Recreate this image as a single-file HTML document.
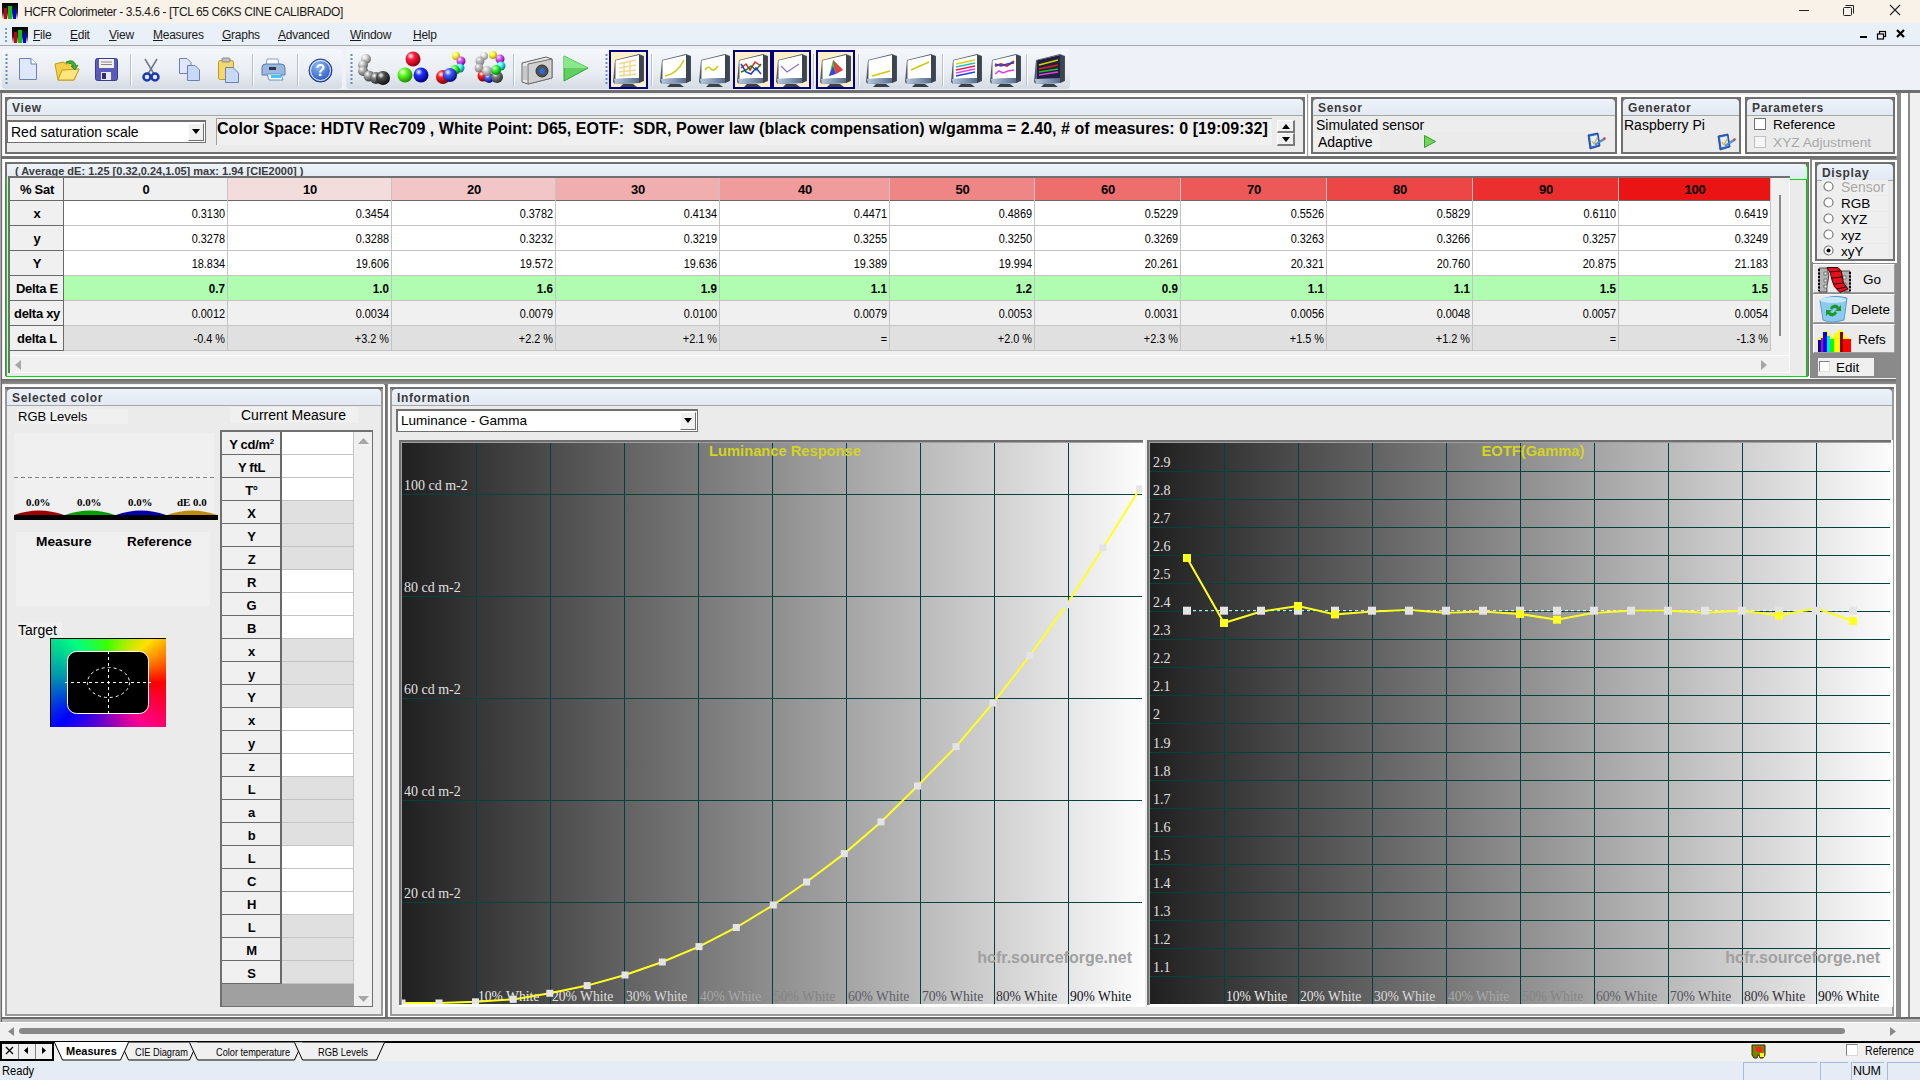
<!DOCTYPE html><html><head><meta charset="utf-8"><title>HCFR</title><style>
*{margin:0;padding:0;box-sizing:border-box}
html,body{width:1920px;height:1080px;overflow:hidden;background:#f0f0f0;font-family:"Liberation Sans",sans-serif;font-size:12px;color:#000}
.a{position:absolute}
.t{position:absolute;white-space:nowrap;line-height:1}
.ser{font-family:"Liberation Serif",serif}
.hdrt{position:absolute;font-weight:bold;font-size:12px;letter-spacing:0.65px;color:#3a3a3a;white-space:nowrap;line-height:1}
</style></head><body>
<div class="a" style="left:0px;top:0px;width:1920px;height:23px;background:#f9f2e8;"></div>
<div class="t" style="left:24px;top:6px;font-size:12px;color:#1a1a1a;letter-spacing:-0.4px">HCFR Colorimeter - 3.5.4.6 - [TCL 65 C6KS CINE CALIBRADO]</div>
<svg class="a" style="left:2px;top:3px" width="16" height="16" viewBox="0 0 16 16"><defs><linearGradient id="ai2" x1="0" x2="0" y1="0" y2="1"><stop offset="0" stop-color="#000"/><stop offset="0.6" stop-color="#202830"/><stop offset="1" stop-color="#f0f0f0"/></linearGradient></defs><rect x="0" y="0" width="16" height="16" fill="url(#ai2)"/><rect x="2" y="5" width="3" height="11" fill="#d00000"/><rect x="6" y="3" width="4" height="13" fill="#10c010"/><rect x="11" y="6" width="3" height="10" fill="#0000e0"/></svg>
<svg class="a" style="left:1790px;top:0" width="130" height="23"><line x1="9" y1="10.5" x2="19" y2="10.5" stroke="#222" stroke-width="1"/><rect x="53.5" y="7.5" width="8" height="8" fill="none" stroke="#222" rx="1"/><path d="M55.5 5.5 H63.5 V13.5" fill="none" stroke="#222"/><line x1="100" y1="5" x2="110" y2="15" stroke="#222" stroke-width="1.1"/><line x1="110" y1="5" x2="100" y2="15" stroke="#222" stroke-width="1.1"/></svg>
<div class="a" style="left:0px;top:23px;width:1920px;height:22px;background:#eaf0f8;"></div>
<div class="a" style="left:0px;top:45px;width:1920px;height:1px;background:#a8a8a8;"></div>
<div class="t" style="left:33px;top:29px;font-size:12px;color:#1a1a1a;letter-spacing:-0.25px"><u>F</u>ile</div>
<div class="t" style="left:70px;top:29px;font-size:12px;color:#1a1a1a;letter-spacing:-0.25px"><u>E</u>dit</div>
<div class="t" style="left:109px;top:29px;font-size:12px;color:#1a1a1a;letter-spacing:-0.25px"><u>V</u>iew</div>
<div class="t" style="left:153px;top:29px;font-size:12px;color:#1a1a1a;letter-spacing:-0.25px"><u>M</u>easures</div>
<div class="t" style="left:222px;top:29px;font-size:12px;color:#1a1a1a;letter-spacing:-0.25px"><u>G</u>raphs</div>
<div class="t" style="left:278px;top:29px;font-size:12px;color:#1a1a1a;letter-spacing:-0.25px"><u>A</u>dvanced</div>
<div class="t" style="left:350px;top:29px;font-size:12px;color:#1a1a1a;letter-spacing:-0.25px"><u>W</u>indow</div>
<div class="t" style="left:413px;top:29px;font-size:12px;color:#1a1a1a;letter-spacing:-0.25px"><u>H</u>elp</div>
<svg class="a" style="left:12px;top:27px" width="16" height="16" viewBox="0 0 16 16"><defs><linearGradient id="ai12" x1="0" x2="0" y1="0" y2="1"><stop offset="0" stop-color="#000"/><stop offset="0.6" stop-color="#202830"/><stop offset="1" stop-color="#f0f0f0"/></linearGradient></defs><rect x="0" y="0" width="16" height="16" fill="url(#ai12)"/><rect x="2" y="5" width="3" height="11" fill="#d00000"/><rect x="6" y="3" width="4" height="13" fill="#10c010"/><rect x="11" y="6" width="3" height="10" fill="#0000e0"/></svg>
<svg class="a" style="left:1855px;top:27px" width="65" height="16"><rect x="5" y="9" width="7" height="2" fill="#000"/><rect x="24.5" y="4.5" width="6" height="5" fill="none" stroke="#000" stroke-width="1.2"/><rect x="22.5" y="7" width="6" height="5" fill="#eaf0f8" stroke="#000" stroke-width="1.2"/><path d="M42 3 L49 10 M49 3 L42 10" stroke="#000" stroke-width="2.2"/></svg>
<svg class="a" style="left:4px;top:28px" width="4" height="14"><line x1="2" y1="0" x2="2" y2="14" stroke="#7a9ac0" stroke-width="2" stroke-dasharray="2,2"/></svg>
<div class="a" style="left:0px;top:46px;width:1920px;height:44px;background:#eef2f8;"></div>
<div class="a" style="left:2px;top:49px;width:340px;height:40px;background:linear-gradient(#f4f7fb,#e9edf3 60%,#d5dbe3);border-radius:4px"></div>
<div class="a" style="left:346px;top:49px;width:724px;height:40px;background:linear-gradient(#f4f7fb,#e9edf3 60%,#d5dbe3);border-radius:4px"></div>
<svg class="a" style="left:5px;top:54px" width="3" height="31"><line x1="1.5" y1="0" x2="1.5" y2="31" stroke="#6a8ab8" stroke-width="2" stroke-dasharray="2,2"/></svg>
<svg class="a" style="left:350px;top:54px" width="3" height="31"><line x1="1.5" y1="0" x2="1.5" y2="31" stroke="#6a8ab8" stroke-width="2" stroke-dasharray="2,2"/></svg>
<svg class="a" style="left:605px;top:54px" width="3" height="31"><line x1="1.5" y1="0" x2="1.5" y2="31" stroke="#6a8ab8" stroke-width="2" stroke-dasharray="2,2"/></svg>
<div class="a" style="left:130px;top:54px;width:1px;height:32px;background:#b8c0cc;"></div>
<div class="a" style="left:131px;top:54px;width:1px;height:32px;background:#ffffff;"></div>
<div class="a" style="left:252px;top:54px;width:1px;height:32px;background:#b8c0cc;"></div>
<div class="a" style="left:253px;top:54px;width:1px;height:32px;background:#ffffff;"></div>
<div class="a" style="left:297px;top:54px;width:1px;height:32px;background:#b8c0cc;"></div>
<div class="a" style="left:298px;top:54px;width:1px;height:32px;background:#ffffff;"></div>
<div class="a" style="left:513px;top:54px;width:1px;height:32px;background:#b8c0cc;"></div>
<div class="a" style="left:514px;top:54px;width:1px;height:32px;background:#ffffff;"></div>
<div class="a" style="left:651px;top:54px;width:1px;height:32px;background:#b8c0cc;"></div>
<div class="a" style="left:652px;top:54px;width:1px;height:32px;background:#ffffff;"></div>
<div class="a" style="left:813px;top:54px;width:1px;height:32px;background:#b8c0cc;"></div>
<div class="a" style="left:814px;top:54px;width:1px;height:32px;background:#ffffff;"></div>
<div class="a" style="left:858px;top:54px;width:1px;height:32px;background:#b8c0cc;"></div>
<div class="a" style="left:859px;top:54px;width:1px;height:32px;background:#ffffff;"></div>
<div class="a" style="left:942px;top:54px;width:1px;height:32px;background:#b8c0cc;"></div>
<div class="a" style="left:943px;top:54px;width:1px;height:32px;background:#ffffff;"></div>
<div class="a" style="left:1026px;top:54px;width:1px;height:32px;background:#b8c0cc;"></div>
<div class="a" style="left:1027px;top:54px;width:1px;height:32px;background:#ffffff;"></div>
<svg class="a" style="left:18px;top:57px" width="20" height="24" viewBox="0 0 20 24"><path d="M1.5 1.5 H13 L18.5 7 V22.5 H1.5 Z" fill="#dfe8fa" stroke="#6a82b8" stroke-width="1"/><path d="M13 1.5 V7 H18.5" fill="#fff" stroke="#6a82b8" stroke-width="1"/></svg>
<svg class="a" style="left:54px;top:58px" width="26" height="24" viewBox="0 0 26 24"><path d="M1 6 L9 4 L12 6 L20 5 L21 12 L25 11 L20 22 L4 22 Z" fill="#f4d04a" stroke="#c89a10" stroke-width="1"/><path d="M4 22 L8 12 L25 11 L20 22 Z" fill="#ffe680" stroke="#c89a10" stroke-width="1"/><path d="M12 4 Q20 0 22 8 L24 7 L21 12 L17 8 L19 8 Q17 4 12 5 Z" fill="#3cb43c" stroke="#1a7a1a" stroke-width="0.8"/></svg>
<svg class="a" style="left:95px;top:58px" width="23" height="23" viewBox="0 0 23 23"><rect x="0.5" y="0.5" width="22" height="22" rx="2" fill="#5a5ab8" stroke="#3a3a90"/><rect x="4" y="1" width="15" height="9" fill="#f0f0f0"/><line x1="6" y1="4" x2="17" y2="4" stroke="#888"/><line x1="6" y1="6.5" x2="17" y2="6.5" stroke="#888"/><rect x="6" y="14" width="10" height="8" fill="#e8e8f0"/><rect x="7" y="15" width="4" height="6" fill="#303070"/></svg>
<svg class="a" style="left:142px;top:58px" width="18" height="24" viewBox="0 0 18 24"><line x1="3" y1="1" x2="12" y2="16" stroke="#707888" stroke-width="1.5"/><line x1="15" y1="1" x2="6" y2="16" stroke="#707888" stroke-width="1.5"/><circle cx="5" cy="19" r="3.5" fill="none" stroke="#1a3ab0" stroke-width="2.5"/><circle cx="13" cy="19" r="3.5" fill="none" stroke="#1a3ab0" stroke-width="2.5"/></svg>
<svg class="a" style="left:178px;top:57px" width="23" height="25" viewBox="0 0 23 25"><path d="M1.5 1.5 H9 L13 5.5 V16.5 H1.5 Z" fill="#dfe8fa" stroke="#6a82b8"/><path d="M9.5 8.5 H17 L21.5 13 V23.5 H9.5 Z" fill="#c8d8f8" stroke="#6a82b8"/></svg>
<svg class="a" style="left:217px;top:57px" width="23" height="26" viewBox="0 0 23 26"><rect x="1.5" y="3.5" width="15" height="19" rx="2" fill="#f4d86a" stroke="#b8962a"/><rect x="5" y="1" width="8" height="4" rx="1" fill="#c0c0c0" stroke="#888"/><path d="M8.5 10.5 H16 L21.5 16 V25.5 H8.5 Z" fill="#c8d8f8" stroke="#6a82b8"/></svg>
<svg class="a" style="left:261px;top:58px" width="25" height="24" viewBox="0 0 25 24"><path d="M6 1 H17 L18 9 H5 Z" fill="#fff" stroke="#8aa0c0"/><path d="M1 9 Q1 6 5 6 H20 Q24 6 24 10 V17 H1 Z" fill="#9ab8e0" stroke="#5a7ab0"/><rect x="8" y="9" width="7" height="3" fill="#303848"/><path d="M6 16 H20 L22 22 H8 Z" fill="#fff" stroke="#6a90c8"/><rect x="10" y="17" width="10" height="3" fill="#40c8f0"/></svg>
<svg class="a" style="left:308px;top:58px" width="25" height="25" viewBox="0 0 25 25"><defs><radialGradient id="hg" cx="0.4" cy="0.3" r="0.8"><stop offset="0" stop-color="#8ab8f8"/><stop offset="1" stop-color="#1a4ab8"/></radialGradient></defs><circle cx="12.5" cy="12.5" r="11.5" fill="url(#hg)" stroke="#1a3a90"/><circle cx="12.5" cy="12.5" r="10" fill="none" stroke="#fff" stroke-width="1"/><text x="12.5" y="18" text-anchor="middle" font-family="Liberation Sans" font-weight="bold" font-size="16" fill="#fff">?</text></svg>
<svg class="a" style="left:357px;top:51px" width="34" height="35" viewBox="0 0 34 35"><defs><radialGradient id="RG1" cx="0.35" cy="0.3" r="0.7"><stop offset="0" stop-color="#fff"/><stop offset="0.35" stop-color="#d8d8d8"/><stop offset="1" stop-color="#707070"/></radialGradient></defs><circle cx="9" cy="8" r="5" fill="url(#RG1)"/><defs><radialGradient id="RG2" cx="0.35" cy="0.3" r="0.7"><stop offset="0" stop-color="#fff"/><stop offset="0.35" stop-color="#c8c8c8"/><stop offset="1" stop-color="#606060"/></radialGradient></defs><circle cx="6" cy="14" r="5" fill="url(#RG2)"/><defs><radialGradient id="RG3" cx="0.35" cy="0.3" r="0.7"><stop offset="0" stop-color="#fff"/><stop offset="0.35" stop-color="#b8b8b8"/><stop offset="1" stop-color="#505050"/></radialGradient></defs><circle cx="6" cy="20" r="5" fill="url(#RG3)"/><defs><radialGradient id="RG4" cx="0.35" cy="0.3" r="0.7"><stop offset="0" stop-color="#fff"/><stop offset="0.35" stop-color="#a8a8a8"/><stop offset="1" stop-color="#404040"/></radialGradient></defs><circle cx="12" cy="25" r="5.5" fill="url(#RG4)"/><defs><radialGradient id="RG5" cx="0.35" cy="0.3" r="0.7"><stop offset="0" stop-color="#fff"/><stop offset="0.35" stop-color="#808080"/><stop offset="1" stop-color="#303030"/></radialGradient></defs><circle cx="19" cy="27" r="6" fill="url(#RG5)"/><defs><radialGradient id="RG6" cx="0.35" cy="0.3" r="0.7"><stop offset="0" stop-color="#fff"/><stop offset="0.35" stop-color="#505050"/><stop offset="1" stop-color="#101010"/></radialGradient></defs><circle cx="26" cy="27" r="7" fill="url(#RG6)"/></svg>
<svg class="a" style="left:396px;top:51px" width="34" height="35" viewBox="0 0 34 35"><defs><radialGradient id="RG7" cx="0.35" cy="0.3" r="0.7"><stop offset="0" stop-color="#fff"/><stop offset="0.35" stop-color="#ff2040"/><stop offset="1" stop-color="#900010"/></radialGradient></defs><circle cx="17" cy="8" r="7.5" fill="url(#RG7)"/><defs><radialGradient id="RG8" cx="0.35" cy="0.3" r="0.7"><stop offset="0" stop-color="#fff"/><stop offset="0.35" stop-color="#60ff20"/><stop offset="1" stop-color="#209000"/></radialGradient></defs><circle cx="9" cy="24" r="7.5" fill="url(#RG8)"/><defs><radialGradient id="RG9" cx="0.35" cy="0.3" r="0.7"><stop offset="0" stop-color="#fff"/><stop offset="0.35" stop-color="#2030ff"/><stop offset="1" stop-color="#000080"/></radialGradient></defs><circle cx="25" cy="24" r="7.5" fill="url(#RG9)"/></svg>
<svg class="a" style="left:435px;top:51px" width="34" height="35" viewBox="0 0 34 35"><defs><radialGradient id="RG10" cx="0.35" cy="0.3" r="0.7"><stop offset="0" stop-color="#fff"/><stop offset="0.35" stop-color="#ffff40"/><stop offset="1" stop-color="#b0a000"/></radialGradient></defs><circle cx="21" cy="5" r="4" fill="url(#RG10)"/><defs><radialGradient id="RG11" cx="0.35" cy="0.3" r="0.7"><stop offset="0" stop-color="#fff"/><stop offset="0.35" stop-color="#e060ff"/><stop offset="1" stop-color="#8000a0"/></radialGradient></defs><circle cx="26" cy="10" r="4.5" fill="url(#RG11)"/><defs><radialGradient id="RG12" cx="0.35" cy="0.3" r="0.7"><stop offset="0" stop-color="#fff"/><stop offset="0.35" stop-color="#40ffff"/><stop offset="1" stop-color="#008080"/></radialGradient></defs><circle cx="25" cy="17" r="4.5" fill="url(#RG12)"/><defs><radialGradient id="RG13" cx="0.35" cy="0.3" r="0.7"><stop offset="0" stop-color="#fff"/><stop offset="0.35" stop-color="#40ff40"/><stop offset="1" stop-color="#008000"/></radialGradient></defs><circle cx="20" cy="19" r="5" fill="url(#RG13)"/><defs><radialGradient id="RG14" cx="0.35" cy="0.3" r="0.7"><stop offset="0" stop-color="#fff"/><stop offset="0.35" stop-color="#ff2020"/><stop offset="1" stop-color="#800000"/></radialGradient></defs><circle cx="8" cy="26" r="7" fill="url(#RG14)"/><defs><radialGradient id="RG15" cx="0.35" cy="0.3" r="0.7"><stop offset="0" stop-color="#fff"/><stop offset="0.35" stop-color="#4060ff"/><stop offset="1" stop-color="#001080"/></radialGradient></defs><circle cx="15" cy="24" r="7" fill="url(#RG15)"/></svg>
<svg class="a" style="left:474px;top:51px" width="34" height="35" viewBox="0 0 34 35"><defs><radialGradient id="RG16" cx="0.35" cy="0.3" r="0.7"><stop offset="0" stop-color="#fff"/><stop offset="0.35" stop-color="#e8e8e8"/><stop offset="1" stop-color="#909090"/></radialGradient></defs><circle cx="10" cy="5" r="4" fill="url(#RG16)"/><defs><radialGradient id="RG17" cx="0.35" cy="0.3" r="0.7"><stop offset="0" stop-color="#fff"/><stop offset="0.35" stop-color="#ffff40"/><stop offset="1" stop-color="#b0a000"/></radialGradient></defs><circle cx="19" cy="4" r="4" fill="url(#RG17)"/><defs><radialGradient id="RG18" cx="0.35" cy="0.3" r="0.7"><stop offset="0" stop-color="#fff"/><stop offset="0.35" stop-color="#e060ff"/><stop offset="1" stop-color="#8000a0"/></radialGradient></defs><circle cx="26" cy="8" r="4.5" fill="url(#RG18)"/><defs><radialGradient id="RG19" cx="0.35" cy="0.3" r="0.7"><stop offset="0" stop-color="#fff"/><stop offset="0.35" stop-color="#40ffff"/><stop offset="1" stop-color="#008080"/></radialGradient></defs><circle cx="27" cy="15" r="4.5" fill="url(#RG19)"/><defs><radialGradient id="RG20" cx="0.35" cy="0.3" r="0.7"><stop offset="0" stop-color="#fff"/><stop offset="0.35" stop-color="#c0c0c0"/><stop offset="1" stop-color="#808080"/></radialGradient></defs><circle cx="6" cy="10" r="4.5" fill="url(#RG20)"/><defs><radialGradient id="RG21" cx="0.35" cy="0.3" r="0.7"><stop offset="0" stop-color="#fff"/><stop offset="0.35" stop-color="#c0c0c0"/><stop offset="1" stop-color="#808080"/></radialGradient></defs><circle cx="5" cy="17" r="4.5" fill="url(#RG21)"/><defs><radialGradient id="RG22" cx="0.35" cy="0.3" r="0.7"><stop offset="0" stop-color="#fff"/><stop offset="0.35" stop-color="#ff2020"/><stop offset="1" stop-color="#800000"/></radialGradient></defs><circle cx="9" cy="25" r="5.5" fill="url(#RG22)"/><defs><radialGradient id="RG23" cx="0.35" cy="0.3" r="0.7"><stop offset="0" stop-color="#fff"/><stop offset="0.35" stop-color="#4060ff"/><stop offset="1" stop-color="#001080"/></radialGradient></defs><circle cx="15" cy="27" r="5" fill="url(#RG23)"/><defs><radialGradient id="RG24" cx="0.35" cy="0.3" r="0.7"><stop offset="0" stop-color="#fff"/><stop offset="0.35" stop-color="#808080"/><stop offset="1" stop-color="#303030"/></radialGradient></defs><circle cx="23" cy="26" r="6" fill="url(#RG24)"/><defs><radialGradient id="RG25" cx="0.35" cy="0.3" r="0.7"><stop offset="0" stop-color="#fff"/><stop offset="0.35" stop-color="#40ff40"/><stop offset="1" stop-color="#008000"/></radialGradient></defs><circle cx="22" cy="19" r="5" fill="url(#RG25)"/><defs><radialGradient id="RG26" cx="0.35" cy="0.3" r="0.7"><stop offset="0" stop-color="#fff"/><stop offset="0.35" stop-color="#d0d0d0"/><stop offset="1" stop-color="#808080"/></radialGradient></defs><circle cx="13" cy="20" r="5" fill="url(#RG26)"/></svg>
<svg class="a" style="left:520px;top:54px" width="33" height="31" viewBox="0 0 33 31"><path d="M2 9 L26 3 L32 5 L32 24 L8 30 L2 28 Z" fill="#e8e8e8" stroke="#606060"/><path d="M8 10 L32 5 L32 24 L8 30 Z" fill="#d0d0d0" stroke="#707070"/><circle cx="22" cy="17" r="6" fill="#505050" stroke="#303030"/><circle cx="22" cy="17" r="3" fill="#2a6ad8"/><rect x="3" y="12" width="4" height="14" fill="#c8c8c8"/></svg>
<svg class="a" style="left:562px;top:55px" width="28" height="27" viewBox="0 0 28 27"><path d="M2 1 L26 13 L2 26 Z" fill="#60d060" stroke="#30a030"/><path d="M2 1 L26 13 L2 13 Z" fill="#8ae88a"/></svg>
<div class="a" style="left:609px;top:50px;width:39px;height:39px;background:#fdf0c8;border:2px solid #000080"></div>
<svg class="a" style="left:612px;top:52px" width="34" height="36" viewBox="0 0 34 36"><defs><linearGradient id="bz" x1="0" x2="1"><stop offset="0" stop-color="#b8c8dc"/><stop offset="0.6" stop-color="#7890b0"/><stop offset="1" stop-color="#506480"/></linearGradient></defs><path d="M3 8 L27 2 L32 4 L32 29 L27 31 L3 32 L1 30 Z" fill="#505a68"/><path d="M3.5 8.5 L27 3 L27 26 L3.5 27 Z" fill="#ffffff"/><path d="M2 27 L27 26 L29 29 L27 31 L3 32 Z" fill="url(#bz)"/><path d="M27 3 L31.5 4.5 L31.5 28.5 L27 31 Z" fill="#3c4450"/><path d="M11 32 L21 32 L25 35 L8 35 Z" fill="#3a4048"/><g stroke="#f0d890" stroke-width="1.5"><line x1="7" y1="12" x2="24" y2="8"/><line x1="7" y1="16" x2="24" y2="13"/><line x1="7" y1="20" x2="24" y2="18"/><line x1="7" y1="24" x2="24" y2="22"/><line x1="12" y1="11" x2="12" y2="25"/><line x1="18" y1="9" x2="18" y2="24"/></g></svg>
<svg class="a" style="left:659px;top:52px" width="34" height="36" viewBox="0 0 34 36"><defs><linearGradient id="bz" x1="0" x2="1"><stop offset="0" stop-color="#b8c8dc"/><stop offset="0.6" stop-color="#7890b0"/><stop offset="1" stop-color="#506480"/></linearGradient></defs><path d="M3 8 L27 2 L32 4 L32 29 L27 31 L3 32 L1 30 Z" fill="#505a68"/><path d="M3.5 8.5 L27 3 L27 26 L3.5 27 Z" fill="#ffffff"/><path d="M2 27 L27 26 L29 29 L27 31 L3 32 Z" fill="url(#bz)"/><path d="M27 3 L31.5 4.5 L31.5 28.5 L27 31 Z" fill="#3c4450"/><path d="M11 32 L21 32 L25 35 L8 35 Z" fill="#3a4048"/><path d="M6 24 Q18 22 25 8" fill="none" stroke="#d0c800" stroke-width="1.5"/></svg>
<svg class="a" style="left:698px;top:52px" width="34" height="36" viewBox="0 0 34 36"><defs><linearGradient id="bz" x1="0" x2="1"><stop offset="0" stop-color="#b8c8dc"/><stop offset="0.6" stop-color="#7890b0"/><stop offset="1" stop-color="#506480"/></linearGradient></defs><path d="M3 8 L27 2 L32 4 L32 29 L27 31 L3 32 L1 30 Z" fill="#505a68"/><path d="M3.5 8.5 L27 3 L27 26 L3.5 27 Z" fill="#ffffff"/><path d="M2 27 L27 26 L29 29 L27 31 L3 32 Z" fill="url(#bz)"/><path d="M27 3 L31.5 4.5 L31.5 28.5 L27 31 Z" fill="#3c4450"/><path d="M11 32 L21 32 L25 35 L8 35 Z" fill="#3a4048"/><path d="M7 18 Q10 13 13 17 Q16 20 20 14" fill="none" stroke="#d0c800" stroke-width="1.5"/></svg>
<div class="a" style="left:733px;top:50px;width:39px;height:39px;background:#fdf0c8;border:2px solid #000080"></div>
<svg class="a" style="left:736px;top:52px" width="34" height="36" viewBox="0 0 34 36"><defs><linearGradient id="bz" x1="0" x2="1"><stop offset="0" stop-color="#b8c8dc"/><stop offset="0.6" stop-color="#7890b0"/><stop offset="1" stop-color="#506480"/></linearGradient></defs><path d="M3 8 L27 2 L32 4 L32 29 L27 31 L3 32 L1 30 Z" fill="#505a68"/><path d="M3.5 8.5 L27 3 L27 26 L3.5 27 Z" fill="#ffffff"/><path d="M2 27 L27 26 L29 29 L27 31 L3 32 Z" fill="url(#bz)"/><path d="M27 3 L31.5 4.5 L31.5 28.5 L27 31 Z" fill="#3c4450"/><path d="M11 32 L21 32 L25 35 L8 35 Z" fill="#3a4048"/><path d="M5 16 L10 12 L14 18 L19 10 L25 14" fill="none" stroke="#e03020" stroke-width="1.5"/><path d="M5 20 L10 18 L15 14 L20 18 L25 12" fill="none" stroke="#208020" stroke-width="1.5"/><path d="M5 12 L10 20 L15 22 L20 16 L25 22" fill="none" stroke="#2040c0" stroke-width="1.5"/></svg>
<div class="a" style="left:772px;top:50px;width:39px;height:39px;background:#fdf0c8;border:2px solid #000080"></div>
<svg class="a" style="left:775px;top:52px" width="34" height="36" viewBox="0 0 34 36"><defs><linearGradient id="bz" x1="0" x2="1"><stop offset="0" stop-color="#b8c8dc"/><stop offset="0.6" stop-color="#7890b0"/><stop offset="1" stop-color="#506480"/></linearGradient></defs><path d="M3 8 L27 2 L32 4 L32 29 L27 31 L3 32 L1 30 Z" fill="#505a68"/><path d="M3.5 8.5 L27 3 L27 26 L3.5 27 Z" fill="#ffffff"/><path d="M2 27 L27 26 L29 29 L27 31 L3 32 Z" fill="url(#bz)"/><path d="M27 3 L31.5 4.5 L31.5 28.5 L27 31 Z" fill="#3c4450"/><path d="M11 32 L21 32 L25 35 L8 35 Z" fill="#3a4048"/><path d="M6 14 L12 20 L18 16 L24 12" fill="none" stroke="#9070d0" stroke-width="1.2"/></svg>
<div class="a" style="left:816px;top:50px;width:39px;height:39px;background:#fdf0c8;border:2px solid #000080"></div>
<svg class="a" style="left:819px;top:52px" width="34" height="36" viewBox="0 0 34 36"><defs><linearGradient id="bz" x1="0" x2="1"><stop offset="0" stop-color="#b8c8dc"/><stop offset="0.6" stop-color="#7890b0"/><stop offset="1" stop-color="#506480"/></linearGradient></defs><path d="M3 8 L27 2 L32 4 L32 29 L27 31 L3 32 L1 30 Z" fill="#505a68"/><path d="M3.5 8.5 L27 3 L27 26 L3.5 27 Z" fill="#ffffff"/><path d="M2 27 L27 26 L29 29 L27 31 L3 32 Z" fill="url(#bz)"/><path d="M27 3 L31.5 4.5 L31.5 28.5 L27 31 Z" fill="#3c4450"/><path d="M11 32 L21 32 L25 35 L8 35 Z" fill="#3a4048"/><path d="M10 24 L14 8 L24 18 Z" fill="#40c040"/><path d="M14 8 L24 18 L17 22 Z" fill="#e04040"/><path d="M10 24 L17 22 L14 14 Z" fill="#4040e0"/></svg>
<svg class="a" style="left:865px;top:52px" width="34" height="36" viewBox="0 0 34 36"><defs><linearGradient id="bz" x1="0" x2="1"><stop offset="0" stop-color="#b8c8dc"/><stop offset="0.6" stop-color="#7890b0"/><stop offset="1" stop-color="#506480"/></linearGradient></defs><path d="M3 8 L27 2 L32 4 L32 29 L27 31 L3 32 L1 30 Z" fill="#505a68"/><path d="M3.5 8.5 L27 3 L27 26 L3.5 27 Z" fill="#ffffff"/><path d="M2 27 L27 26 L29 29 L27 31 L3 32 Z" fill="url(#bz)"/><path d="M27 3 L31.5 4.5 L31.5 28.5 L27 31 Z" fill="#3c4450"/><path d="M11 32 L21 32 L25 35 L8 35 Z" fill="#3a4048"/><path d="M7 24 L25 19" fill="none" stroke="#d0c800" stroke-width="1.5"/></svg>
<svg class="a" style="left:904px;top:52px" width="34" height="36" viewBox="0 0 34 36"><defs><linearGradient id="bz" x1="0" x2="1"><stop offset="0" stop-color="#b8c8dc"/><stop offset="0.6" stop-color="#7890b0"/><stop offset="1" stop-color="#506480"/></linearGradient></defs><path d="M3 8 L27 2 L32 4 L32 29 L27 31 L3 32 L1 30 Z" fill="#505a68"/><path d="M3.5 8.5 L27 3 L27 26 L3.5 27 Z" fill="#ffffff"/><path d="M2 27 L27 26 L29 29 L27 31 L3 32 Z" fill="url(#bz)"/><path d="M27 3 L31.5 4.5 L31.5 28.5 L27 31 Z" fill="#3c4450"/><path d="M11 32 L21 32 L25 35 L8 35 Z" fill="#3a4048"/><path d="M7 18 L25 10" fill="none" stroke="#d0c800" stroke-width="1.5"/></svg>
<svg class="a" style="left:950px;top:52px" width="34" height="36" viewBox="0 0 34 36"><defs><linearGradient id="bz" x1="0" x2="1"><stop offset="0" stop-color="#b8c8dc"/><stop offset="0.6" stop-color="#7890b0"/><stop offset="1" stop-color="#506480"/></linearGradient></defs><path d="M3 8 L27 2 L32 4 L32 29 L27 31 L3 32 L1 30 Z" fill="#505a68"/><path d="M3.5 8.5 L27 3 L27 26 L3.5 27 Z" fill="#ffffff"/><path d="M2 27 L27 26 L29 29 L27 31 L3 32 Z" fill="url(#bz)"/><path d="M27 3 L31.5 4.5 L31.5 28.5 L27 31 Z" fill="#3c4450"/><path d="M11 32 L21 32 L25 35 L8 35 Z" fill="#3a4048"/><g stroke-width="1.3"><line x1="6" y1="12" x2="25" y2="8" stroke="#e0d000"/><line x1="6" y1="15" x2="25" y2="11" stroke="#20c0c0"/><line x1="6" y1="18" x2="25" y2="14" stroke="#e02060"/><line x1="6" y1="21" x2="25" y2="17" stroke="#f040f0"/><line x1="6" y1="24" x2="25" y2="20" stroke="#2040e0"/></g></svg>
<svg class="a" style="left:989px;top:52px" width="34" height="36" viewBox="0 0 34 36"><defs><linearGradient id="bz" x1="0" x2="1"><stop offset="0" stop-color="#b8c8dc"/><stop offset="0.6" stop-color="#7890b0"/><stop offset="1" stop-color="#506480"/></linearGradient></defs><path d="M3 8 L27 2 L32 4 L32 29 L27 31 L3 32 L1 30 Z" fill="#505a68"/><path d="M3.5 8.5 L27 3 L27 26 L3.5 27 Z" fill="#ffffff"/><path d="M2 27 L27 26 L29 29 L27 31 L3 32 Z" fill="url(#bz)"/><path d="M27 3 L31.5 4.5 L31.5 28.5 L27 31 Z" fill="#3c4450"/><path d="M11 32 L21 32 L25 35 L8 35 Z" fill="#3a4048"/><path d="M6 14 L12 12 L18 14 L25 9" fill="none" stroke="#e02020" stroke-width="2"/><path d="M6 12 L12 14 L18 12 L25 11" fill="none" stroke="#2040e0" stroke-width="1.5"/><path d="M6 22 L10 19 L14 21 L19 19 L25 18" fill="none" stroke="#e040e0" stroke-width="1.5"/></svg>
<svg class="a" style="left:1033px;top:52px" width="34" height="36" viewBox="0 0 34 36"><defs><linearGradient id="bz" x1="0" x2="1"><stop offset="0" stop-color="#b8c8dc"/><stop offset="0.6" stop-color="#7890b0"/><stop offset="1" stop-color="#506480"/></linearGradient></defs><path d="M3 8 L27 2 L32 4 L32 29 L27 31 L3 32 L1 30 Z" fill="#505a68"/><path d="M3.5 8.5 L27 3 L27 26 L3.5 27 Z" fill="#ffffff"/><path d="M2 27 L27 26 L29 29 L27 31 L3 32 Z" fill="url(#bz)"/><path d="M27 3 L31.5 4.5 L31.5 28.5 L27 31 Z" fill="#3c4450"/><path d="M11 32 L21 32 L25 35 L8 35 Z" fill="#3a4048"/><path d="M3.5 8.5 L27 3 L27 26 L3.5 27 Z" fill="#202040"/><g stroke-width="1.3"><line x1="6" y1="13" x2="25" y2="8" stroke="#e0d000"/><line x1="6" y1="17" x2="25" y2="13" stroke="#e02020"/><line x1="6" y1="20" x2="25" y2="17" stroke="#20c020"/><line x1="6" y1="23" x2="25" y2="20" stroke="#e040e0"/></g></svg>
<div class="a" style="left:0px;top:90px;width:1920px;height:3px;background:#6e6e6e;"></div>
<div class="a" style="left:0px;top:93px;width:1920px;height:947px;background:#f0f0f0;"></div>
<div class="a" style="left:0px;top:93px;width:2px;height:947px;background:#a0a0a0;"></div>
<div class="a" style="left:1896px;top:93px;width:5px;height:947px;background:#8a8a8a;"></div>
<div class="a" style="left:1901px;top:93px;width:7px;height:947px;background:#ffffff;"></div>
<div class="a" style="left:1908px;top:93px;width:2px;height:947px;background:#8a8a8a;"></div>
<div class="a" style="left:3px;top:95px;width:1304px;height:61px;background:#ffffff;"></div>
<div class="a" style="left:5px;top:97px;width:1300px;height:57px;background:#707070;"></div>
<div class="a" style="left:5px;top:97px;width:1300px;height:2px;background:#707070;"></div>
<div class="a" style="left:7px;top:99px;width:1296px;height:53px;background:#ebebeb;"></div>
<div class="a" style="left:7px;top:99px;width:1296px;height:6px;background:#707070;"></div>
<div class="a" style="left:7px;top:99px;width:1296px;height:17px;background:linear-gradient(#eef3fa,#e2e9f3);border-bottom:1px solid #a6a6a6;border-top-left-radius:4px;border-top-right-radius:4px"></div>
<div class="hdrt" style="left:12px;top:102px">View</div>
<div class="a" style="left:1309px;top:95px;width:310px;height:61px;background:#ffffff;"></div>
<div class="a" style="left:1311px;top:97px;width:306px;height:57px;background:#707070;"></div>
<div class="a" style="left:1311px;top:97px;width:306px;height:2px;background:#707070;"></div>
<div class="a" style="left:1313px;top:99px;width:302px;height:53px;background:#ebebeb;"></div>
<div class="a" style="left:1313px;top:99px;width:302px;height:6px;background:#707070;"></div>
<div class="a" style="left:1313px;top:99px;width:302px;height:17px;background:linear-gradient(#eef3fa,#e2e9f3);border-bottom:1px solid #a6a6a6;border-top-left-radius:4px;border-top-right-radius:4px"></div>
<div class="hdrt" style="left:1318px;top:102px">Sensor</div>
<div class="a" style="left:1619px;top:95px;width:124px;height:61px;background:#ffffff;"></div>
<div class="a" style="left:1621px;top:97px;width:120px;height:57px;background:#707070;"></div>
<div class="a" style="left:1621px;top:97px;width:120px;height:2px;background:#707070;"></div>
<div class="a" style="left:1623px;top:99px;width:116px;height:53px;background:#ebebeb;"></div>
<div class="a" style="left:1623px;top:99px;width:116px;height:6px;background:#707070;"></div>
<div class="a" style="left:1623px;top:99px;width:116px;height:17px;background:linear-gradient(#eef3fa,#e2e9f3);border-bottom:1px solid #a6a6a6;border-top-left-radius:4px;border-top-right-radius:4px"></div>
<div class="hdrt" style="left:1628px;top:102px">Generator</div>
<div class="a" style="left:1743px;top:95px;width:154px;height:61px;background:#ffffff;"></div>
<div class="a" style="left:1745px;top:97px;width:150px;height:57px;background:#707070;"></div>
<div class="a" style="left:1745px;top:97px;width:150px;height:2px;background:#707070;"></div>
<div class="a" style="left:1747px;top:99px;width:146px;height:53px;background:#ebebeb;"></div>
<div class="a" style="left:1747px;top:99px;width:146px;height:6px;background:#707070;"></div>
<div class="a" style="left:1747px;top:99px;width:146px;height:17px;background:linear-gradient(#eef3fa,#e2e9f3);border-bottom:1px solid #a6a6a6;border-top-left-radius:4px;border-top-right-radius:4px"></div>
<div class="hdrt" style="left:1752px;top:102px">Parameters</div>
<div class="a" style="left:0px;top:156px;width:1896px;height:3px;background:#707070;"></div>
<div class="a" style="left:1307px;top:94px;width:1px;height:62px;background:#a0a0a0;"></div>
<div class="a" style="left:6px;top:120px;width:200px;height:23px;background:#707070;"></div>
<div class="a" style="left:8px;top:122px;width:197px;height:20px;background:#ffffff;"></div>
<div class="t" style="left:11px;top:125px;font-size:14px;color:#000;">Red saturation scale</div>
<div class="a" style="left:188px;top:123px;width:16px;height:18px;background:#f0f0f0;border-top:1px solid #fff;border-left:1px solid #fff;border-bottom:1px solid #707070;border-right:1px solid #707070"></div>
<svg class="a" style="left:191px;top:129px" width="10" height="6"><path d="M1 0 L9 0 L5 5 Z" fill="#000"/></svg>
<div class="a" style="left:216px;top:118px;width:1056px;height:27px;background:#f0f0f0;border-top:1px solid #a0a0a0;border-left:1px solid #a0a0a0"></div>
<div class="t" style="left:217px;top:121px;font-size:16px;color:#000;font-weight:bold;letter-spacing:0.05px">Color Space: HDTV Rec709 , White Point: D65, EOTF:&nbsp; SDR, Power law (black compensation) w/gamma = 2.40, # of measures: 0 [19:09:32]</div>
<div class="a" style="left:1277px;top:120px;width:18px;height:13px;background:#f0f0f0;border-bottom:2px solid #7a7a7a;border-right:2px solid #7a7a7a;border-top:1px solid #fff;border-left:1px solid #fff"></div>
<svg class="a" style="left:1281px;top:123px" width="10" height="7"><path d="M1 6 L9 6 L5 1 Z" fill="#000"/></svg>
<div class="a" style="left:1277px;top:133px;width:18px;height:13px;background:#f0f0f0;border-bottom:2px solid #7a7a7a;border-right:2px solid #7a7a7a;border-top:1px solid #fff;border-left:1px solid #fff"></div>
<svg class="a" style="left:1281px;top:136px" width="10" height="7"><path d="M1 1 L9 1 L5 6 Z" fill="#000"/></svg>
<div class="a" style="left:1314px;top:117px;width:298px;height:15px;background:#ededed;"></div>
<div class="t" style="left:1316px;top:118px;font-size:14px;color:#000;">Simulated sensor</div>
<div class="a" style="left:1314px;top:133px;width:66px;height:17px;background:#f0f0f0;"></div>
<div class="t" style="left:1318px;top:135px;font-size:14px;color:#000;">Adaptive</div>
<svg class="a" style="left:1424px;top:135px" width="12" height="13"><path d="M0.5 0.5 L11.5 6.5 L0.5 12.5 Z" fill="#6ed45a" stroke="#3a9a2a" stroke-width="1"/></svg>
<svg class="a" style="left:1587px;top:132px" width="20" height="18" viewBox="0 0 20 18"><path d="M1 3 L11 1 L13 14 L3 17 Z" fill="#2a62c8" stroke="#1a3a90" stroke-width="0.8"/><path d="M3 4.5 L10 3 L11.5 12.5 L4.5 14.5 Z" fill="#e4f0fc"/><path d="M5 9 L7 12 L10 6" stroke="#d8b030" stroke-width="1.3" fill="none"/><path d="M8 12 L17 6 L18 7.5 L9 13 Z" fill="#4aa0f0" stroke="#2a60b0" stroke-width="0.5"/><circle cx="17.5" cy="6.5" r="1.3" fill="#e04040"/></svg>
<div class="t" style="left:1624px;top:118px;font-size:14px;color:#000;">Raspberry Pi</div>
<svg class="a" style="left:1717px;top:133px" width="20" height="18" viewBox="0 0 20 18"><path d="M1 3 L11 1 L13 14 L3 17 Z" fill="#2a62c8" stroke="#1a3a90" stroke-width="0.8"/><path d="M3 4.5 L10 3 L11.5 12.5 L4.5 14.5 Z" fill="#e4f0fc"/><path d="M5 9 L7 12 L10 6" stroke="#d8b030" stroke-width="1.3" fill="none"/><path d="M8 12 L17 6 L18 7.5 L9 13 Z" fill="#4aa0f0" stroke="#2a60b0" stroke-width="0.5"/><circle cx="17.5" cy="6.5" r="1.3" fill="#e04040"/></svg>
<div class="a" style="left:1754px;top:118px;width:12px;height:12px;background:#ffffff;border:1px solid #707070"></div>
<div class="t" style="left:1773px;top:118px;font-size:13.5px;color:#000;">Reference</div>
<div class="a" style="left:1754px;top:136px;width:12px;height:12px;background:#f6f6f6;border:1px solid #c0c0c0"></div>
<div class="t" style="left:1773px;top:136px;font-size:13.7px;color:#a8a8a8;">XYZ Adjustment</div>
<div class="a" style="left:3px;top:159px;width:1807px;height:221px;background:#ffffff;"></div>
<div class="a" style="left:5px;top:162px;width:1804px;height:215px;background:#707070;"></div>
<div class="a" style="left:7px;top:164px;width:1799px;height:212px;background:#ebebeb;"></div>
<div class="a" style="left:5px;top:376px;width:1804px;height:1px;background:#ffffff;"></div>
<div class="a" style="left:7px;top:164px;width:1801px;height:15px;background:linear-gradient(#eef3fa,#e2e9f3);border-top-left-radius:5px;border-top-right-radius:5px;border-right:1px solid #00e000"></div>
<div class="a" style="left:6px;top:178px;width:1px;height:199px;background:#00e000;"></div>
<div class="a" style="left:1807px;top:170px;width:1px;height:207px;background:#00e000;"></div>
<div class="a" style="left:6px;top:376px;width:1802px;height:1px;background:#00e000;"></div>
<div class="a" style="left:1790px;top:179px;width:18px;height:1px;background:#00e000;"></div>
<div class="t" style="left:15px;top:166px;font-size:11px;color:#3a3a3a;font-weight:bold">( Average dE: 1.25 [0.32,0.24,1.05] max: 1.94 [CIE2000] )</div>
<div class="a" style="left:8px;top:176px;width:1782px;height:197px;background:#707070;"></div>
<div class="a" style="left:10px;top:178px;width:1780px;height:195px;background:#ffffff;"></div>
<div class="a" style="left:10px;top:178px;width:1779px;height:194px;background:#f0f0f0;"></div>
<div class="a" style="left:10px;top:178px;width:54px;height:177px;background:#f0f0f0;"></div>
<div class="a" style="left:64px;top:178px;width:164px;height:22px;background:#f0f0f0;"></div>
<div class="a" style="left:228px;top:178px;width:164px;height:22px;background:#f2dcdc;"></div>
<div class="a" style="left:392px;top:178px;width:164px;height:22px;background:#f2c6c6;"></div>
<div class="a" style="left:556px;top:178px;width:164px;height:22px;background:#f0aeae;"></div>
<div class="a" style="left:720px;top:178px;width:170px;height:22px;background:#f09c9c;"></div>
<div class="a" style="left:890px;top:178px;width:145px;height:22px;background:#ef8686;"></div>
<div class="a" style="left:1035px;top:178px;width:146px;height:22px;background:#ee6e6e;"></div>
<div class="a" style="left:1181px;top:178px;width:146px;height:22px;background:#ed5858;"></div>
<div class="a" style="left:1327px;top:178px;width:146px;height:22px;background:#ec4646;"></div>
<div class="a" style="left:1473px;top:178px;width:146px;height:22px;background:#eb2e2e;"></div>
<div class="a" style="left:1619px;top:178px;width:152px;height:22px;background:#ea1414;"></div>
<div class="a" style="left:64px;top:200px;width:1707px;height:25px;background:#ffffff;"></div>
<div class="a" style="left:64px;top:225px;width:1707px;height:25px;background:#ffffff;"></div>
<div class="a" style="left:64px;top:250px;width:1707px;height:25px;background:#ffffff;"></div>
<div class="a" style="left:64px;top:275px;width:1707px;height:25px;background:#b0fcb0;"></div>
<div class="a" style="left:64px;top:300px;width:1707px;height:25px;background:#f0f0f0;"></div>
<div class="a" style="left:64px;top:325px;width:1707px;height:25px;background:#e0e0e0;"></div>
<div class="a" style="left:64px;top:350px;width:1707px;height:5px;background:#f0f0f0;"></div>
<div class="a" style="left:10px;top:200px;width:54px;height:1px;background:#6a6a6a;"></div>
<div class="a" style="left:64px;top:200px;width:1707px;height:1px;background:#6a6a6a;"></div>
<div class="a" style="left:10px;top:225px;width:54px;height:1px;background:#6a6a6a;"></div>
<div class="a" style="left:64px;top:225px;width:1707px;height:1px;background:#c4c4c4;"></div>
<div class="a" style="left:10px;top:250px;width:54px;height:1px;background:#6a6a6a;"></div>
<div class="a" style="left:64px;top:250px;width:1707px;height:1px;background:#c4c4c4;"></div>
<div class="a" style="left:10px;top:275px;width:54px;height:1px;background:#6a6a6a;"></div>
<div class="a" style="left:64px;top:275px;width:1707px;height:1px;background:#c4c4c4;"></div>
<div class="a" style="left:10px;top:300px;width:54px;height:1px;background:#6a6a6a;"></div>
<div class="a" style="left:64px;top:300px;width:1707px;height:1px;background:#c4c4c4;"></div>
<div class="a" style="left:10px;top:325px;width:54px;height:1px;background:#6a6a6a;"></div>
<div class="a" style="left:64px;top:325px;width:1707px;height:1px;background:#c4c4c4;"></div>
<div class="a" style="left:10px;top:350px;width:54px;height:1px;background:#6a6a6a;"></div>
<div class="a" style="left:64px;top:350px;width:1707px;height:1px;background:#c4c4c4;"></div>
<div class="a" style="left:63px;top:178px;width:1px;height:177px;background:#6a6a6a;"></div>
<div class="a" style="left:227px;top:178px;width:1px;height:177px;background:#c4c4c4;"></div>
<div class="a" style="left:391px;top:178px;width:1px;height:177px;background:#c4c4c4;"></div>
<div class="a" style="left:555px;top:178px;width:1px;height:177px;background:#c4c4c4;"></div>
<div class="a" style="left:719px;top:178px;width:1px;height:177px;background:#c4c4c4;"></div>
<div class="a" style="left:889px;top:178px;width:1px;height:177px;background:#c4c4c4;"></div>
<div class="a" style="left:1034px;top:178px;width:1px;height:177px;background:#c4c4c4;"></div>
<div class="a" style="left:1180px;top:178px;width:1px;height:177px;background:#c4c4c4;"></div>
<div class="a" style="left:1326px;top:178px;width:1px;height:177px;background:#c4c4c4;"></div>
<div class="a" style="left:1472px;top:178px;width:1px;height:177px;background:#c4c4c4;"></div>
<div class="a" style="left:1618px;top:178px;width:1px;height:177px;background:#c4c4c4;"></div>
<div class="a" style="left:1770px;top:178px;width:1px;height:177px;background:#c4c4c4;"></div>
<div class="t" style="left:10px;top:183px;width:54px;text-align:center;font-size:13px;font-weight:bold;letter-spacing:-0.3px">% Sat</div>
<div class="t" style="left:64px;top:183px;width:164px;text-align:center;font-size:13px;font-weight:bold;letter-spacing:-0.3px">0</div>
<div class="t" style="left:228px;top:183px;width:164px;text-align:center;font-size:13px;font-weight:bold;letter-spacing:-0.3px">10</div>
<div class="t" style="left:392px;top:183px;width:164px;text-align:center;font-size:13px;font-weight:bold;letter-spacing:-0.3px">20</div>
<div class="t" style="left:556px;top:183px;width:164px;text-align:center;font-size:13px;font-weight:bold;letter-spacing:-0.3px">30</div>
<div class="t" style="left:720px;top:183px;width:170px;text-align:center;font-size:13px;font-weight:bold;letter-spacing:-0.3px">40</div>
<div class="t" style="left:890px;top:183px;width:145px;text-align:center;font-size:13px;font-weight:bold;letter-spacing:-0.3px">50</div>
<div class="t" style="left:1035px;top:183px;width:146px;text-align:center;font-size:13px;font-weight:bold;letter-spacing:-0.3px">60</div>
<div class="t" style="left:1181px;top:183px;width:146px;text-align:center;font-size:13px;font-weight:bold;letter-spacing:-0.3px">70</div>
<div class="t" style="left:1327px;top:183px;width:146px;text-align:center;font-size:13px;font-weight:bold;letter-spacing:-0.3px">80</div>
<div class="t" style="left:1473px;top:183px;width:146px;text-align:center;font-size:13px;font-weight:bold;letter-spacing:-0.3px">90</div>
<div class="t" style="left:1619px;top:183px;width:152px;text-align:center;font-size:13px;font-weight:bold;letter-spacing:-0.3px">100</div>
<div class="t" style="left:10px;top:207px;width:54px;text-align:center;font-size:13px;font-weight:bold;letter-spacing:-0.3px">x</div>
<div class="t" style="left:64px;top:208px;width:161px;text-align:right;font-size:12.5px;transform:scaleX(0.87);transform-origin:100% 0;">0.3130</div>
<div class="t" style="left:228px;top:208px;width:161px;text-align:right;font-size:12.5px;transform:scaleX(0.87);transform-origin:100% 0;">0.3454</div>
<div class="t" style="left:392px;top:208px;width:161px;text-align:right;font-size:12.5px;transform:scaleX(0.87);transform-origin:100% 0;">0.3782</div>
<div class="t" style="left:556px;top:208px;width:161px;text-align:right;font-size:12.5px;transform:scaleX(0.87);transform-origin:100% 0;">0.4134</div>
<div class="t" style="left:720px;top:208px;width:167px;text-align:right;font-size:12.5px;transform:scaleX(0.87);transform-origin:100% 0;">0.4471</div>
<div class="t" style="left:890px;top:208px;width:142px;text-align:right;font-size:12.5px;transform:scaleX(0.87);transform-origin:100% 0;">0.4869</div>
<div class="t" style="left:1035px;top:208px;width:143px;text-align:right;font-size:12.5px;transform:scaleX(0.87);transform-origin:100% 0;">0.5229</div>
<div class="t" style="left:1181px;top:208px;width:143px;text-align:right;font-size:12.5px;transform:scaleX(0.87);transform-origin:100% 0;">0.5526</div>
<div class="t" style="left:1327px;top:208px;width:143px;text-align:right;font-size:12.5px;transform:scaleX(0.87);transform-origin:100% 0;">0.5829</div>
<div class="t" style="left:1473px;top:208px;width:143px;text-align:right;font-size:12.5px;transform:scaleX(0.87);transform-origin:100% 0;">0.6110</div>
<div class="t" style="left:1619px;top:208px;width:149px;text-align:right;font-size:12.5px;transform:scaleX(0.87);transform-origin:100% 0;">0.6419</div>
<div class="t" style="left:10px;top:232px;width:54px;text-align:center;font-size:13px;font-weight:bold;letter-spacing:-0.3px">y</div>
<div class="t" style="left:64px;top:233px;width:161px;text-align:right;font-size:12.5px;transform:scaleX(0.87);transform-origin:100% 0;">0.3278</div>
<div class="t" style="left:228px;top:233px;width:161px;text-align:right;font-size:12.5px;transform:scaleX(0.87);transform-origin:100% 0;">0.3288</div>
<div class="t" style="left:392px;top:233px;width:161px;text-align:right;font-size:12.5px;transform:scaleX(0.87);transform-origin:100% 0;">0.3232</div>
<div class="t" style="left:556px;top:233px;width:161px;text-align:right;font-size:12.5px;transform:scaleX(0.87);transform-origin:100% 0;">0.3219</div>
<div class="t" style="left:720px;top:233px;width:167px;text-align:right;font-size:12.5px;transform:scaleX(0.87);transform-origin:100% 0;">0.3255</div>
<div class="t" style="left:890px;top:233px;width:142px;text-align:right;font-size:12.5px;transform:scaleX(0.87);transform-origin:100% 0;">0.3250</div>
<div class="t" style="left:1035px;top:233px;width:143px;text-align:right;font-size:12.5px;transform:scaleX(0.87);transform-origin:100% 0;">0.3269</div>
<div class="t" style="left:1181px;top:233px;width:143px;text-align:right;font-size:12.5px;transform:scaleX(0.87);transform-origin:100% 0;">0.3263</div>
<div class="t" style="left:1327px;top:233px;width:143px;text-align:right;font-size:12.5px;transform:scaleX(0.87);transform-origin:100% 0;">0.3266</div>
<div class="t" style="left:1473px;top:233px;width:143px;text-align:right;font-size:12.5px;transform:scaleX(0.87);transform-origin:100% 0;">0.3257</div>
<div class="t" style="left:1619px;top:233px;width:149px;text-align:right;font-size:12.5px;transform:scaleX(0.87);transform-origin:100% 0;">0.3249</div>
<div class="t" style="left:10px;top:257px;width:54px;text-align:center;font-size:13px;font-weight:bold;letter-spacing:-0.3px">Y</div>
<div class="t" style="left:64px;top:258px;width:161px;text-align:right;font-size:12.5px;transform:scaleX(0.87);transform-origin:100% 0;">18.834</div>
<div class="t" style="left:228px;top:258px;width:161px;text-align:right;font-size:12.5px;transform:scaleX(0.87);transform-origin:100% 0;">19.606</div>
<div class="t" style="left:392px;top:258px;width:161px;text-align:right;font-size:12.5px;transform:scaleX(0.87);transform-origin:100% 0;">19.572</div>
<div class="t" style="left:556px;top:258px;width:161px;text-align:right;font-size:12.5px;transform:scaleX(0.87);transform-origin:100% 0;">19.636</div>
<div class="t" style="left:720px;top:258px;width:167px;text-align:right;font-size:12.5px;transform:scaleX(0.87);transform-origin:100% 0;">19.389</div>
<div class="t" style="left:890px;top:258px;width:142px;text-align:right;font-size:12.5px;transform:scaleX(0.87);transform-origin:100% 0;">19.994</div>
<div class="t" style="left:1035px;top:258px;width:143px;text-align:right;font-size:12.5px;transform:scaleX(0.87);transform-origin:100% 0;">20.261</div>
<div class="t" style="left:1181px;top:258px;width:143px;text-align:right;font-size:12.5px;transform:scaleX(0.87);transform-origin:100% 0;">20.321</div>
<div class="t" style="left:1327px;top:258px;width:143px;text-align:right;font-size:12.5px;transform:scaleX(0.87);transform-origin:100% 0;">20.760</div>
<div class="t" style="left:1473px;top:258px;width:143px;text-align:right;font-size:12.5px;transform:scaleX(0.87);transform-origin:100% 0;">20.875</div>
<div class="t" style="left:1619px;top:258px;width:149px;text-align:right;font-size:12.5px;transform:scaleX(0.87);transform-origin:100% 0;">21.183</div>
<div class="t" style="left:10px;top:282px;width:54px;text-align:center;font-size:13px;font-weight:bold;letter-spacing:-0.3px">Delta E</div>
<div class="t" style="left:64px;top:283px;width:161px;text-align:right;font-size:12.5px;transform:scaleX(0.93);transform-origin:100% 0;font-weight:bold;">0.7</div>
<div class="t" style="left:228px;top:283px;width:161px;text-align:right;font-size:12.5px;transform:scaleX(0.93);transform-origin:100% 0;font-weight:bold;">1.0</div>
<div class="t" style="left:392px;top:283px;width:161px;text-align:right;font-size:12.5px;transform:scaleX(0.93);transform-origin:100% 0;font-weight:bold;">1.6</div>
<div class="t" style="left:556px;top:283px;width:161px;text-align:right;font-size:12.5px;transform:scaleX(0.93);transform-origin:100% 0;font-weight:bold;">1.9</div>
<div class="t" style="left:720px;top:283px;width:167px;text-align:right;font-size:12.5px;transform:scaleX(0.93);transform-origin:100% 0;font-weight:bold;">1.1</div>
<div class="t" style="left:890px;top:283px;width:142px;text-align:right;font-size:12.5px;transform:scaleX(0.93);transform-origin:100% 0;font-weight:bold;">1.2</div>
<div class="t" style="left:1035px;top:283px;width:143px;text-align:right;font-size:12.5px;transform:scaleX(0.93);transform-origin:100% 0;font-weight:bold;">0.9</div>
<div class="t" style="left:1181px;top:283px;width:143px;text-align:right;font-size:12.5px;transform:scaleX(0.93);transform-origin:100% 0;font-weight:bold;">1.1</div>
<div class="t" style="left:1327px;top:283px;width:143px;text-align:right;font-size:12.5px;transform:scaleX(0.93);transform-origin:100% 0;font-weight:bold;">1.1</div>
<div class="t" style="left:1473px;top:283px;width:143px;text-align:right;font-size:12.5px;transform:scaleX(0.93);transform-origin:100% 0;font-weight:bold;">1.5</div>
<div class="t" style="left:1619px;top:283px;width:149px;text-align:right;font-size:12.5px;transform:scaleX(0.93);transform-origin:100% 0;font-weight:bold;">1.5</div>
<div class="t" style="left:10px;top:307px;width:54px;text-align:center;font-size:13px;font-weight:bold;letter-spacing:-0.3px">delta xy</div>
<div class="t" style="left:64px;top:308px;width:161px;text-align:right;font-size:12.5px;transform:scaleX(0.87);transform-origin:100% 0;">0.0012</div>
<div class="t" style="left:228px;top:308px;width:161px;text-align:right;font-size:12.5px;transform:scaleX(0.87);transform-origin:100% 0;">0.0034</div>
<div class="t" style="left:392px;top:308px;width:161px;text-align:right;font-size:12.5px;transform:scaleX(0.87);transform-origin:100% 0;">0.0079</div>
<div class="t" style="left:556px;top:308px;width:161px;text-align:right;font-size:12.5px;transform:scaleX(0.87);transform-origin:100% 0;">0.0100</div>
<div class="t" style="left:720px;top:308px;width:167px;text-align:right;font-size:12.5px;transform:scaleX(0.87);transform-origin:100% 0;">0.0079</div>
<div class="t" style="left:890px;top:308px;width:142px;text-align:right;font-size:12.5px;transform:scaleX(0.87);transform-origin:100% 0;">0.0053</div>
<div class="t" style="left:1035px;top:308px;width:143px;text-align:right;font-size:12.5px;transform:scaleX(0.87);transform-origin:100% 0;">0.0031</div>
<div class="t" style="left:1181px;top:308px;width:143px;text-align:right;font-size:12.5px;transform:scaleX(0.87);transform-origin:100% 0;">0.0056</div>
<div class="t" style="left:1327px;top:308px;width:143px;text-align:right;font-size:12.5px;transform:scaleX(0.87);transform-origin:100% 0;">0.0048</div>
<div class="t" style="left:1473px;top:308px;width:143px;text-align:right;font-size:12.5px;transform:scaleX(0.87);transform-origin:100% 0;">0.0057</div>
<div class="t" style="left:1619px;top:308px;width:149px;text-align:right;font-size:12.5px;transform:scaleX(0.87);transform-origin:100% 0;">0.0054</div>
<div class="t" style="left:10px;top:332px;width:54px;text-align:center;font-size:13px;font-weight:bold;letter-spacing:-0.3px">delta L</div>
<div class="t" style="left:64px;top:333px;width:161px;text-align:right;font-size:12.5px;transform:scaleX(0.87);transform-origin:100% 0;">-0.4 %</div>
<div class="t" style="left:228px;top:333px;width:161px;text-align:right;font-size:12.5px;transform:scaleX(0.87);transform-origin:100% 0;">+3.2 %</div>
<div class="t" style="left:392px;top:333px;width:161px;text-align:right;font-size:12.5px;transform:scaleX(0.87);transform-origin:100% 0;">+2.2 %</div>
<div class="t" style="left:556px;top:333px;width:161px;text-align:right;font-size:12.5px;transform:scaleX(0.87);transform-origin:100% 0;">+2.1 %</div>
<div class="t" style="left:720px;top:333px;width:167px;text-align:right;font-size:12.5px;transform:scaleX(0.87);transform-origin:100% 0;">=</div>
<div class="t" style="left:890px;top:333px;width:142px;text-align:right;font-size:12.5px;transform:scaleX(0.87);transform-origin:100% 0;">+2.0 %</div>
<div class="t" style="left:1035px;top:333px;width:143px;text-align:right;font-size:12.5px;transform:scaleX(0.87);transform-origin:100% 0;">+2.3 %</div>
<div class="t" style="left:1181px;top:333px;width:143px;text-align:right;font-size:12.5px;transform:scaleX(0.87);transform-origin:100% 0;">+1.5 %</div>
<div class="t" style="left:1327px;top:333px;width:143px;text-align:right;font-size:12.5px;transform:scaleX(0.87);transform-origin:100% 0;">+1.2 %</div>
<div class="t" style="left:1473px;top:333px;width:143px;text-align:right;font-size:12.5px;transform:scaleX(0.87);transform-origin:100% 0;">=</div>
<div class="t" style="left:1619px;top:333px;width:149px;text-align:right;font-size:12.5px;transform:scaleX(0.87);transform-origin:100% 0;">-1.3 %</div>
<div class="a" style="left:1771px;top:178px;width:18px;height:177px;background:#f0f0f0;"></div>
<div class="a" style="left:1779px;top:195px;width:2px;height:141px;background:#8a8a8a;"></div>
<div class="a" style="left:10px;top:351px;width:1761px;height:4px;background:#f0f0f0;"></div>
<div class="a" style="left:10px;top:355px;width:1779px;height:1px;background:#ffffff;"></div>
<div class="a" style="left:10px;top:356px;width:1779px;height:16px;background:#f0f0f0;"></div>
<svg class="a" style="left:13px;top:360px" width="10" height="10"><path d="M8 0 L2 5 L8 10 Z" fill="#a6a6a6"/></svg>
<svg class="a" style="left:1759px;top:360px" width="10" height="10"><path d="M2 0 L8 5 L2 10 Z" fill="#a6a6a6"/></svg>
<div class="a" style="left:1810px;top:159px;width:87px;height:219px;background:#8a8a8a;"></div>
<div class="a" style="left:1812px;top:160px;width:84px;height:102px;background:#ffffff;"></div>
<div class="a" style="left:1813px;top:160px;width:84px;height:103px;background:#ffffff;"></div>
<div class="a" style="left:1815px;top:162px;width:80px;height:99px;background:#707070;"></div>
<div class="a" style="left:1815px;top:162px;width:80px;height:2px;background:#707070;"></div>
<div class="a" style="left:1817px;top:164px;width:76px;height:95px;background:#ebebeb;"></div>
<div class="a" style="left:1817px;top:164px;width:76px;height:6px;background:#707070;"></div>
<div class="a" style="left:1817px;top:164px;width:76px;height:17px;background:linear-gradient(#eef3fa,#e2e9f3);border-bottom:1px solid #a6a6a6;border-top-left-radius:4px;border-top-right-radius:4px"></div>
<div class="hdrt" style="left:1822px;top:167px">Display</div>
<div class="a" style="left:1822px;top:180px;width:66px;height:15px;background:#efefef;"></div>
<svg class="a" style="left:1823px;top:181px" width="12" height="12"><circle cx="5.5" cy="5.5" r="4.5" fill="#fff" stroke="#7a7a7a" stroke-width="1.2"/></svg>
<div class="t" style="left:1841px;top:181px;font-size:13.9px;color:#a8a8a8;">Sensor</div>
<div class="a" style="left:1822px;top:196px;width:66px;height:15px;background:#efefef;"></div>
<svg class="a" style="left:1823px;top:197px" width="12" height="12"><circle cx="5.5" cy="5.5" r="4.5" fill="#fff" stroke="#7a7a7a" stroke-width="1.2"/></svg>
<div class="t" style="left:1841px;top:197px;font-size:13.5px;color:#000;">RGB</div>
<div class="a" style="left:1822px;top:212px;width:66px;height:15px;background:#efefef;"></div>
<svg class="a" style="left:1823px;top:213px" width="12" height="12"><circle cx="5.5" cy="5.5" r="4.5" fill="#fff" stroke="#7a7a7a" stroke-width="1.2"/></svg>
<div class="t" style="left:1841px;top:213px;font-size:13.5px;color:#000;">XYZ</div>
<div class="a" style="left:1822px;top:228px;width:66px;height:15px;background:#efefef;"></div>
<svg class="a" style="left:1823px;top:229px" width="12" height="12"><circle cx="5.5" cy="5.5" r="4.5" fill="#fff" stroke="#7a7a7a" stroke-width="1.2"/></svg>
<div class="t" style="left:1841px;top:229px;font-size:13.5px;color:#000;">xyz</div>
<div class="a" style="left:1822px;top:244px;width:66px;height:15px;background:#efefef;"></div>
<svg class="a" style="left:1823px;top:245px" width="12" height="12"><circle cx="5.5" cy="5.5" r="4.5" fill="#fff" stroke="#7a7a7a" stroke-width="1.2"/><circle cx="5.5" cy="5.5" r="2" fill="#000"/></svg>
<div class="t" style="left:1841px;top:245px;font-size:13.5px;color:#000;">xyY</div>
<div class="a" style="left:1813px;top:264px;width:82px;height:29px;background:#ebebeb;border-top:1px solid #fff;border-left:1px solid #fff;border-bottom:1px solid #a0a0a0;border-right:1px solid #a0a0a0"></div>
<div class="t" style="left:1863px;top:273px;font-size:13.5px;color:#000;">Go</div>
<div class="a" style="left:1813px;top:294px;width:82px;height:29px;background:#ebebeb;border-top:1px solid #fff;border-left:1px solid #fff;border-bottom:1px solid #a0a0a0;border-right:1px solid #a0a0a0"></div>
<div class="t" style="left:1851px;top:303px;font-size:13.5px;color:#000;">Delete</div>
<div class="a" style="left:1813px;top:324px;width:82px;height:29px;background:#ebebeb;border-top:1px solid #fff;border-left:1px solid #fff;border-bottom:1px solid #a0a0a0;border-right:1px solid #a0a0a0"></div>
<div class="t" style="left:1858px;top:333px;font-size:13.5px;color:#000;">Refs</div>
<svg class="a" style="left:1818px;top:267px" width="33" height="26" viewBox="0 0 33 26"><path d="M1 1 H9 Q12 8 10 14 Q8 20 9 25 H1 Z" fill="#b4b4b4" stroke="#303030" stroke-width="0.8"/><path d="M1 2 V24" stroke="#000" stroke-width="2" stroke-dasharray="2,1.5"/><path d="M6 5 h3 v3 h-3 Z M6 12 h3 v3 h-3 Z M6 18 h3 v3 h-3 Z" fill="#e8e8e8" stroke="#404040" stroke-width="0.6"/><path d="M23 4 H32 V25 H26 Q22 18 24 12 Q25 8 23 4 Z" fill="#b4b4b4" stroke="#303030" stroke-width="0.8"/><path d="M32 5 V24" stroke="#000" stroke-width="2" stroke-dasharray="2,1.5"/><path d="M25 9 h3 v3 h-3 Z M25 16 h3 v3 h-3 Z" fill="#e8e8e8" stroke="#404040" stroke-width="0.6"/><path d="M9 0.5 L20 0.5 Q24 3 24 9 Q24 16 30 22 L22 25.5 Q15 20 14 13 Q13 5 9 0.5 Z" fill="#e8101a" stroke="#3a0000" stroke-width="1"/><path d="M12 5 L22 4 M14 11 L24 10 M16 17 L26 16 M19 22 L28 20" stroke="#3a0000" stroke-width="1.2"/></svg>
<svg class="a" style="left:1819px;top:296px" width="30" height="27" viewBox="0 0 30 27"><path d="M1 4 Q14 -2 28 2 L25 24 Q12 28 4 24 Z" fill="#8ccaf0" stroke="#5a9ad0" stroke-width="1"/><ellipse cx="14" cy="4" rx="13" ry="3" fill="#c8e8fa"/><path d="M11 12 a5 5 0 0 1 9 -1 l2 -2 v6 h-6 l2 -2 a3 3 0 0 0 -5 1 Z M18 17 a5 5 0 0 1 -9 1 l-2 2 v-6 h6 l-2 2 a3 3 0 0 0 5 -1 Z" fill="#1a9a2a"/></svg>
<svg class="a" style="left:1818px;top:329px" width="33" height="23" viewBox="0 0 33 23"><path d="M0 23 V10 L3 8 L6 4 L8 1 L11 4 L13 7 L16 9 L19 4 L21 0 L24 2 L26 5 L28 8 L31 9 L33 10 V23 Z" fill="#ffff00"/><rect x="0" y="11" width="3" height="12" fill="#00007a"/><rect x="3" y="9" width="2" height="14" fill="#c000c0"/><rect x="5" y="3" width="4" height="20" fill="#0000ff"/><rect x="9" y="7" width="3" height="16" fill="#00e0ff"/><rect x="12" y="10" width="4" height="13" fill="#00ff00"/><rect x="16" y="4" width="6" height="19" fill="#ffff00"/><rect x="22" y="3" width="3" height="20" fill="#800000"/><rect x="25" y="10" width="8" height="13" fill="#ff0000"/></svg>
<div class="a" style="left:1818px;top:358px;width:56px;height:18px;background:#f0f0f0;"></div>
<div class="a" style="left:1819px;top:361px;width:11px;height:11px;background:#ffffff;border:1px solid #808080;border-right-color:#e0e0e0;border-bottom-color:#e0e0e0"></div>
<div class="t" style="left:1836px;top:361px;font-size:13.5px;color:#000;">Edit</div>
<div class="a" style="left:0px;top:379px;width:1896px;height:5px;background:linear-gradient(#6a6a6a,#909090);"></div>
<div class="a" style="left:384px;top:384px;width:4px;height:633px;background:linear-gradient(90deg,#909090,#6a6a6a,#909090);"></div>
<div class="a" style="left:3px;top:385px;width:382px;height:633px;background:#ffffff;"></div>
<div class="a" style="left:5px;top:387px;width:378px;height:629px;background:#9a9a9a;"></div>
<div class="a" style="left:5px;top:387px;width:378px;height:2px;background:#707070;"></div>
<div class="a" style="left:7px;top:389px;width:374px;height:625px;background:#ebebeb;"></div>
<div class="a" style="left:7px;top:389px;width:374px;height:6px;background:#707070;"></div>
<div class="a" style="left:7px;top:389px;width:374px;height:17px;background:linear-gradient(#eef3fa,#e2e9f3);border-bottom:1px solid #a6a6a6;border-top-left-radius:4px;border-top-right-radius:4px"></div>
<div class="hdrt" style="left:12px;top:392px">Selected color</div>
<div class="a" style="left:17px;top:409px;width:111px;height:15px;background:#f0f0f0;"></div>
<div class="t" style="left:18px;top:410px;font-size:13px;color:#000;">RGB Levels</div>
<div class="a" style="left:230px;top:407px;width:128px;height:16px;background:#f0f0f0;"></div>
<div class="t" style="left:241px;top:408px;font-size:14px;color:#000;">Current Measure</div>
<div class="a" style="left:14px;top:433px;width:200px;height:87px;background:#f0f0f0;"></div>
<svg class="a" style="left:14px;top:477px" width="200" height="2"><line x1="0" y1="0.5" x2="200" y2="0.5" stroke="#808080" stroke-width="1" stroke-dasharray="4,3"/></svg>
<svg class="a" style="left:14px;top:508px" width="51" height="12"><path d="M0 7 Q25 -2 50 7 L50 8 L0 8 Z" fill="#a00000"/><rect x="0" y="7" width="51" height="5" fill="#000"/></svg>
<div class="t" style="left:26px;top:497px;font-size:10.9px;color:#000;font-family:'Liberation Serif',serif;font-weight:bold">0.0%</div>
<svg class="a" style="left:65px;top:508px" width="51" height="12"><path d="M0 7 Q25 -2 50 7 L50 8 L0 8 Z" fill="#00a000"/><rect x="0" y="7" width="51" height="5" fill="#000"/></svg>
<div class="t" style="left:77px;top:497px;font-size:10.9px;color:#000;font-family:'Liberation Serif',serif;font-weight:bold">0.0%</div>
<svg class="a" style="left:116px;top:508px" width="51" height="12"><path d="M0 7 Q25 -2 50 7 L50 8 L0 8 Z" fill="#0000b0"/><rect x="0" y="7" width="51" height="5" fill="#000"/></svg>
<div class="t" style="left:128px;top:497px;font-size:10.9px;color:#000;font-family:'Liberation Serif',serif;font-weight:bold">0.0%</div>
<svg class="a" style="left:167px;top:508px" width="51" height="12"><path d="M0 7 Q25 -2 50 7 L50 8 L0 8 Z" fill="#c08a10"/><rect x="0" y="7" width="51" height="5" fill="#000"/></svg>
<div class="t" style="left:177px;top:497px;font-size:10.9px;color:#000;font-family:'Liberation Serif',serif;font-weight:bold">dE 0.0</div>
<div class="a" style="left:16px;top:532px;width:194px;height:74px;background:#f0f0f0;"></div>
<div class="t" style="left:36px;top:535px;font-size:13.7px;color:#000;font-weight:bold">Measure</div>
<div class="t" style="left:127px;top:535px;font-size:13.4px;color:#000;font-weight:bold">Reference</div>
<div class="a" style="left:17px;top:622px;width:45px;height:15px;background:#f0f0f0;"></div>
<div class="t" style="left:18px;top:623px;font-size:14px;color:#000;">Target</div>
<div class="a" style="left:50px;top:638px;width:116px;height:89px;background:conic-gradient(from 0deg,#40ff00,#ffe000 45deg,#ff0000 90deg,#ff0090 140deg,#8000c0 180deg,#0000ff 230deg,#0090b0 275deg,#00ff80 320deg,#40ff00)"></div>
<div class="a" style="left:50px;top:638px;width:116px;height:1px;background:#000;"></div>
<div class="a" style="left:50px;top:638px;width:1px;height:89px;background:#000;"></div>
<svg class="a" style="left:50px;top:638px" width="116" height="89" viewBox="0 0 116 89"><rect x="17.5" y="13.5" width="81" height="62" rx="9" fill="#000" stroke="#fff" stroke-width="1"/><line x1="15" y1="44.5" x2="101" y2="44.5" stroke="#fff" stroke-dasharray="3,3"/><line x1="58.5" y1="13" x2="58.5" y2="76" stroke="#fff" stroke-dasharray="3,3"/><ellipse cx="58.5" cy="44.5" rx="21" ry="15" fill="none" stroke="#fff" stroke-dasharray="3,3"/></svg>
<div class="a" style="left:220px;top:430px;width:153px;height:577px;background:#707070;"></div>
<div class="a" style="left:222px;top:432px;width:150px;height:574px;background:#f0f0f0;"></div>
<div class="a" style="left:222px;top:984px;width:132px;height:22px;background:#a0a0a0;"></div>
<div class="a" style="left:222px;top:432px;width:59px;height:23px;background:#f0f0f0;"></div>
<div class="a" style="left:281px;top:432px;width:73px;height:23px;background:#ffffff;"></div>
<div class="a" style="left:222px;top:454px;width:59px;height:1px;background:#6a6a6a;"></div>
<div class="a" style="left:282px;top:454px;width:72px;height:1px;background:#c4c4c4;"></div>
<div class="t" style="left:222px;top:438px;width:59px;text-align:center;font-size:13px;font-weight:bold;letter-spacing:-0.3px">Y cd/m<sup style="font-size:8px;vertical-align:5px">2</sup></div>
<div class="a" style="left:222px;top:455px;width:59px;height:23px;background:#f0f0f0;"></div>
<div class="a" style="left:281px;top:455px;width:73px;height:23px;background:#ffffff;"></div>
<div class="a" style="left:222px;top:477px;width:59px;height:1px;background:#6a6a6a;"></div>
<div class="a" style="left:282px;top:477px;width:72px;height:1px;background:#c4c4c4;"></div>
<div class="t" style="left:222px;top:461px;width:59px;text-align:center;font-size:13px;font-weight:bold;letter-spacing:-0.3px">Y ftL</div>
<div class="a" style="left:222px;top:478px;width:59px;height:23px;background:#f0f0f0;"></div>
<div class="a" style="left:281px;top:478px;width:73px;height:23px;background:#ffffff;"></div>
<div class="a" style="left:222px;top:500px;width:59px;height:1px;background:#6a6a6a;"></div>
<div class="a" style="left:282px;top:500px;width:72px;height:1px;background:#c4c4c4;"></div>
<div class="t" style="left:222px;top:484px;width:59px;text-align:center;font-size:13px;font-weight:bold;letter-spacing:-0.3px">T°</div>
<div class="a" style="left:222px;top:501px;width:59px;height:23px;background:#f0f0f0;"></div>
<div class="a" style="left:281px;top:501px;width:73px;height:23px;background:#e0e0e0;"></div>
<div class="a" style="left:222px;top:523px;width:59px;height:1px;background:#6a6a6a;"></div>
<div class="a" style="left:282px;top:523px;width:72px;height:1px;background:#c4c4c4;"></div>
<div class="t" style="left:222px;top:507px;width:59px;text-align:center;font-size:13px;font-weight:bold;letter-spacing:-0.3px">X</div>
<div class="a" style="left:222px;top:524px;width:59px;height:23px;background:#f0f0f0;"></div>
<div class="a" style="left:281px;top:524px;width:73px;height:23px;background:#e0e0e0;"></div>
<div class="a" style="left:222px;top:546px;width:59px;height:1px;background:#6a6a6a;"></div>
<div class="a" style="left:282px;top:546px;width:72px;height:1px;background:#c4c4c4;"></div>
<div class="t" style="left:222px;top:530px;width:59px;text-align:center;font-size:13px;font-weight:bold;letter-spacing:-0.3px">Y</div>
<div class="a" style="left:222px;top:547px;width:59px;height:23px;background:#f0f0f0;"></div>
<div class="a" style="left:281px;top:547px;width:73px;height:23px;background:#e0e0e0;"></div>
<div class="a" style="left:222px;top:569px;width:59px;height:1px;background:#6a6a6a;"></div>
<div class="a" style="left:282px;top:569px;width:72px;height:1px;background:#c4c4c4;"></div>
<div class="t" style="left:222px;top:553px;width:59px;text-align:center;font-size:13px;font-weight:bold;letter-spacing:-0.3px">Z</div>
<div class="a" style="left:222px;top:570px;width:59px;height:23px;background:#f0f0f0;"></div>
<div class="a" style="left:281px;top:570px;width:73px;height:23px;background:#ffffff;"></div>
<div class="a" style="left:222px;top:592px;width:59px;height:1px;background:#6a6a6a;"></div>
<div class="a" style="left:282px;top:592px;width:72px;height:1px;background:#c4c4c4;"></div>
<div class="t" style="left:222px;top:576px;width:59px;text-align:center;font-size:13px;font-weight:bold;letter-spacing:-0.3px">R</div>
<div class="a" style="left:222px;top:593px;width:59px;height:23px;background:#f0f0f0;"></div>
<div class="a" style="left:281px;top:593px;width:73px;height:23px;background:#ffffff;"></div>
<div class="a" style="left:222px;top:615px;width:59px;height:1px;background:#6a6a6a;"></div>
<div class="a" style="left:282px;top:615px;width:72px;height:1px;background:#c4c4c4;"></div>
<div class="t" style="left:222px;top:599px;width:59px;text-align:center;font-size:13px;font-weight:bold;letter-spacing:-0.3px">G</div>
<div class="a" style="left:222px;top:616px;width:59px;height:23px;background:#f0f0f0;"></div>
<div class="a" style="left:281px;top:616px;width:73px;height:23px;background:#ffffff;"></div>
<div class="a" style="left:222px;top:638px;width:59px;height:1px;background:#6a6a6a;"></div>
<div class="a" style="left:282px;top:638px;width:72px;height:1px;background:#c4c4c4;"></div>
<div class="t" style="left:222px;top:622px;width:59px;text-align:center;font-size:13px;font-weight:bold;letter-spacing:-0.3px">B</div>
<div class="a" style="left:222px;top:639px;width:59px;height:23px;background:#f0f0f0;"></div>
<div class="a" style="left:281px;top:639px;width:73px;height:23px;background:#e0e0e0;"></div>
<div class="a" style="left:222px;top:661px;width:59px;height:1px;background:#6a6a6a;"></div>
<div class="a" style="left:282px;top:661px;width:72px;height:1px;background:#c4c4c4;"></div>
<div class="t" style="left:222px;top:645px;width:59px;text-align:center;font-size:13px;font-weight:bold;letter-spacing:-0.3px">x</div>
<div class="a" style="left:222px;top:662px;width:59px;height:23px;background:#f0f0f0;"></div>
<div class="a" style="left:281px;top:662px;width:73px;height:23px;background:#e0e0e0;"></div>
<div class="a" style="left:222px;top:684px;width:59px;height:1px;background:#6a6a6a;"></div>
<div class="a" style="left:282px;top:684px;width:72px;height:1px;background:#c4c4c4;"></div>
<div class="t" style="left:222px;top:668px;width:59px;text-align:center;font-size:13px;font-weight:bold;letter-spacing:-0.3px">y</div>
<div class="a" style="left:222px;top:685px;width:59px;height:23px;background:#f0f0f0;"></div>
<div class="a" style="left:281px;top:685px;width:73px;height:23px;background:#e0e0e0;"></div>
<div class="a" style="left:222px;top:707px;width:59px;height:1px;background:#6a6a6a;"></div>
<div class="a" style="left:282px;top:707px;width:72px;height:1px;background:#c4c4c4;"></div>
<div class="t" style="left:222px;top:691px;width:59px;text-align:center;font-size:13px;font-weight:bold;letter-spacing:-0.3px">Y</div>
<div class="a" style="left:222px;top:708px;width:59px;height:23px;background:#f0f0f0;"></div>
<div class="a" style="left:281px;top:708px;width:73px;height:23px;background:#ffffff;"></div>
<div class="a" style="left:222px;top:730px;width:59px;height:1px;background:#6a6a6a;"></div>
<div class="a" style="left:282px;top:730px;width:72px;height:1px;background:#c4c4c4;"></div>
<div class="t" style="left:222px;top:714px;width:59px;text-align:center;font-size:13px;font-weight:bold;letter-spacing:-0.3px">x</div>
<div class="a" style="left:222px;top:731px;width:59px;height:23px;background:#f0f0f0;"></div>
<div class="a" style="left:281px;top:731px;width:73px;height:23px;background:#ffffff;"></div>
<div class="a" style="left:222px;top:753px;width:59px;height:1px;background:#6a6a6a;"></div>
<div class="a" style="left:282px;top:753px;width:72px;height:1px;background:#c4c4c4;"></div>
<div class="t" style="left:222px;top:737px;width:59px;text-align:center;font-size:13px;font-weight:bold;letter-spacing:-0.3px">y</div>
<div class="a" style="left:222px;top:754px;width:59px;height:23px;background:#f0f0f0;"></div>
<div class="a" style="left:281px;top:754px;width:73px;height:23px;background:#ffffff;"></div>
<div class="a" style="left:222px;top:776px;width:59px;height:1px;background:#6a6a6a;"></div>
<div class="a" style="left:282px;top:776px;width:72px;height:1px;background:#c4c4c4;"></div>
<div class="t" style="left:222px;top:760px;width:59px;text-align:center;font-size:13px;font-weight:bold;letter-spacing:-0.3px">z</div>
<div class="a" style="left:222px;top:777px;width:59px;height:23px;background:#f0f0f0;"></div>
<div class="a" style="left:281px;top:777px;width:73px;height:23px;background:#e0e0e0;"></div>
<div class="a" style="left:222px;top:799px;width:59px;height:1px;background:#6a6a6a;"></div>
<div class="a" style="left:282px;top:799px;width:72px;height:1px;background:#c4c4c4;"></div>
<div class="t" style="left:222px;top:783px;width:59px;text-align:center;font-size:13px;font-weight:bold;letter-spacing:-0.3px">L</div>
<div class="a" style="left:222px;top:800px;width:59px;height:23px;background:#f0f0f0;"></div>
<div class="a" style="left:281px;top:800px;width:73px;height:23px;background:#e0e0e0;"></div>
<div class="a" style="left:222px;top:822px;width:59px;height:1px;background:#6a6a6a;"></div>
<div class="a" style="left:282px;top:822px;width:72px;height:1px;background:#c4c4c4;"></div>
<div class="t" style="left:222px;top:806px;width:59px;text-align:center;font-size:13px;font-weight:bold;letter-spacing:-0.3px">a</div>
<div class="a" style="left:222px;top:823px;width:59px;height:23px;background:#f0f0f0;"></div>
<div class="a" style="left:281px;top:823px;width:73px;height:23px;background:#e0e0e0;"></div>
<div class="a" style="left:222px;top:845px;width:59px;height:1px;background:#6a6a6a;"></div>
<div class="a" style="left:282px;top:845px;width:72px;height:1px;background:#c4c4c4;"></div>
<div class="t" style="left:222px;top:829px;width:59px;text-align:center;font-size:13px;font-weight:bold;letter-spacing:-0.3px">b</div>
<div class="a" style="left:222px;top:846px;width:59px;height:23px;background:#f0f0f0;"></div>
<div class="a" style="left:281px;top:846px;width:73px;height:23px;background:#ffffff;"></div>
<div class="a" style="left:222px;top:868px;width:59px;height:1px;background:#6a6a6a;"></div>
<div class="a" style="left:282px;top:868px;width:72px;height:1px;background:#c4c4c4;"></div>
<div class="t" style="left:222px;top:852px;width:59px;text-align:center;font-size:13px;font-weight:bold;letter-spacing:-0.3px">L</div>
<div class="a" style="left:222px;top:869px;width:59px;height:23px;background:#f0f0f0;"></div>
<div class="a" style="left:281px;top:869px;width:73px;height:23px;background:#ffffff;"></div>
<div class="a" style="left:222px;top:891px;width:59px;height:1px;background:#6a6a6a;"></div>
<div class="a" style="left:282px;top:891px;width:72px;height:1px;background:#c4c4c4;"></div>
<div class="t" style="left:222px;top:875px;width:59px;text-align:center;font-size:13px;font-weight:bold;letter-spacing:-0.3px">C</div>
<div class="a" style="left:222px;top:892px;width:59px;height:23px;background:#f0f0f0;"></div>
<div class="a" style="left:281px;top:892px;width:73px;height:23px;background:#ffffff;"></div>
<div class="a" style="left:222px;top:914px;width:59px;height:1px;background:#6a6a6a;"></div>
<div class="a" style="left:282px;top:914px;width:72px;height:1px;background:#c4c4c4;"></div>
<div class="t" style="left:222px;top:898px;width:59px;text-align:center;font-size:13px;font-weight:bold;letter-spacing:-0.3px">H</div>
<div class="a" style="left:222px;top:915px;width:59px;height:23px;background:#f0f0f0;"></div>
<div class="a" style="left:281px;top:915px;width:73px;height:23px;background:#e0e0e0;"></div>
<div class="a" style="left:222px;top:937px;width:59px;height:1px;background:#6a6a6a;"></div>
<div class="a" style="left:282px;top:937px;width:72px;height:1px;background:#c4c4c4;"></div>
<div class="t" style="left:222px;top:921px;width:59px;text-align:center;font-size:13px;font-weight:bold;letter-spacing:-0.3px">L</div>
<div class="a" style="left:222px;top:938px;width:59px;height:23px;background:#f0f0f0;"></div>
<div class="a" style="left:281px;top:938px;width:73px;height:23px;background:#e0e0e0;"></div>
<div class="a" style="left:222px;top:960px;width:59px;height:1px;background:#6a6a6a;"></div>
<div class="a" style="left:282px;top:960px;width:72px;height:1px;background:#c4c4c4;"></div>
<div class="t" style="left:222px;top:944px;width:59px;text-align:center;font-size:13px;font-weight:bold;letter-spacing:-0.3px">M</div>
<div class="a" style="left:222px;top:961px;width:59px;height:23px;background:#f0f0f0;"></div>
<div class="a" style="left:281px;top:961px;width:73px;height:23px;background:#e0e0e0;"></div>
<div class="a" style="left:222px;top:983px;width:59px;height:1px;background:#6a6a6a;"></div>
<div class="a" style="left:282px;top:983px;width:72px;height:1px;background:#c4c4c4;"></div>
<div class="t" style="left:222px;top:967px;width:59px;text-align:center;font-size:13px;font-weight:bold;letter-spacing:-0.3px">S</div>
<div class="a" style="left:280px;top:432px;width:2px;height:552px;background:#6a6a6a;"></div>
<div class="a" style="left:353px;top:432px;width:1px;height:552px;background:#c4c4c4;"></div>
<svg class="a" style="left:358px;top:437px" width="11" height="8"><path d="M0 7 L5.5 1 L11 7 Z" fill="#a6a6a6"/></svg>
<svg class="a" style="left:358px;top:995px" width="11" height="8"><path d="M0 1 L5.5 7 L11 1 Z" fill="#a6a6a6"/></svg>
<div class="a" style="left:388px;top:385px;width:1508px;height:633px;background:#ffffff;"></div>
<div class="a" style="left:390px;top:387px;width:1504px;height:629px;background:#9a9a9a;"></div>
<div class="a" style="left:390px;top:387px;width:1504px;height:2px;background:#707070;"></div>
<div class="a" style="left:392px;top:389px;width:1500px;height:625px;background:#ebebeb;"></div>
<div class="a" style="left:392px;top:389px;width:1500px;height:6px;background:#707070;"></div>
<div class="a" style="left:392px;top:389px;width:1500px;height:17px;background:linear-gradient(#eef3fa,#e2e9f3);border-bottom:1px solid #a6a6a6;border-top-left-radius:4px;border-top-right-radius:4px"></div>
<div class="hdrt" style="left:397px;top:392px">Information</div>
<div class="a" style="left:399px;top:440px;width:746px;height:567px;background:#ffffff;"></div>
<div class="a" style="left:399px;top:440px;width:744px;height:2px;background:#707070;"></div>
<div class="a" style="left:399px;top:440px;width:2px;height:565px;background:#707070;"></div>
<div class="a" style="left:401px;top:442px;width:742px;height:1px;background:#a0a0a0;"></div>
<div class="a" style="left:401px;top:442px;width:1px;height:563px;background:#a0a0a0;"></div>
<svg class="a" style="left:402px;top:443px" width="740" height="561" viewBox="0 0 740 561"><defs><linearGradient id="g402" x1="0" x2="1" y1="0" y2="0"><stop offset="0" stop-color="#202020"/><stop offset="1" stop-color="#fcfcfc"/></linearGradient></defs><rect x="0" y="0" width="740" height="561" fill="url(#g402)"/><line x1="74.5" y1="0" x2="74.5" y2="561" stroke="#034040" stroke-width="1"/><line x1="148.5" y1="0" x2="148.5" y2="561" stroke="#034040" stroke-width="1"/><line x1="222.5" y1="0" x2="222.5" y2="561" stroke="#034040" stroke-width="1"/><line x1="296.5" y1="0" x2="296.5" y2="561" stroke="#034040" stroke-width="1"/><line x1="370.5" y1="0" x2="370.5" y2="561" stroke="#034040" stroke-width="1"/><line x1="444.5" y1="0" x2="444.5" y2="561" stroke="#034040" stroke-width="1"/><line x1="518.5" y1="0" x2="518.5" y2="561" stroke="#034040" stroke-width="1"/><line x1="592.5" y1="0" x2="592.5" y2="561" stroke="#034040" stroke-width="1"/><line x1="666.5" y1="0" x2="666.5" y2="561" stroke="#034040" stroke-width="1"/><line x1="0" y1="51.5" x2="740" y2="51.5" stroke="#034040" stroke-width="1"/><line x1="0" y1="153.5" x2="740" y2="153.5" stroke="#034040" stroke-width="1"/><line x1="0" y1="255.5" x2="740" y2="255.5" stroke="#034040" stroke-width="1"/><line x1="0" y1="357.5" x2="740" y2="357.5" stroke="#034040" stroke-width="1"/><line x1="0" y1="459.5" x2="740" y2="459.5" stroke="#034040" stroke-width="1"/><text x="2" y="47" font-family="Liberation Serif" font-size="14" fill="#e0e0e0">100 cd m-2</text><text x="2" y="149" font-family="Liberation Serif" font-size="14" fill="#e0e0e0">80 cd m-2</text><text x="2" y="251" font-family="Liberation Serif" font-size="14" fill="#e0e0e0">60 cd m-2</text><text x="2" y="353" font-family="Liberation Serif" font-size="14" fill="#e0e0e0">40 cd m-2</text><text x="2" y="455" font-family="Liberation Serif" font-size="14" fill="#e0e0e0">20 cd m-2</text><text x="383" y="13" text-anchor="middle" font-family="Liberation Sans" font-weight="bold" font-size="14.7" fill="#d4d41e">Luminance Response</text><text x="76" y="558" font-family="Liberation Serif" font-size="13.6" fill="#e8e8e8">10% White</text><text x="150" y="558" font-family="Liberation Serif" font-size="13.6" fill="#e0e0e0">20% White</text><text x="224" y="558" font-family="Liberation Serif" font-size="13.6" fill="#d8d8d8">30% White</text><text x="298" y="558" font-family="Liberation Serif" font-size="13.6" fill="#a8a8a8">40% White</text><text x="372" y="558" font-family="Liberation Serif" font-size="13.6" fill="#848484">50% White</text><text x="446" y="558" font-family="Liberation Serif" font-size="13.6" fill="#606068">60% White</text><text x="520" y="558" font-family="Liberation Serif" font-size="13.6" fill="#505058">70% White</text><text x="594" y="558" font-family="Liberation Serif" font-size="13.6" fill="#303038">80% White</text><text x="668" y="558" font-family="Liberation Serif" font-size="13.6" fill="#101018">90% White</text><text x="730" y="520" text-anchor="end" font-family="Liberation Sans" font-weight="bold" font-size="16" fill="#a0a0a0">hcfr.sourceforge.net</text><polyline points="0.0,560.0 37.0,560.0 73.5,558.8 111.2,556.4 147.8,550.3 185.2,542.6 223.0,532.0 260.3,519.0 297.0,503.6 334.3,484.5 371.3,462.0 404.6,439.0 442.3,410.6 479.0,378.9 515.5,343.0 554.0,303.7 591.0,260.0 628.0,212.4 664.6,161.7 701.0,104.8 737.7,45.9" fill="none" stroke="#ffff20" stroke-width="2"/><rect x="-3.5" y="556.5" width="7" height="7" fill="#e4e4e4"/><rect x="33.5" y="556.5" width="7" height="7" fill="#e4e4e4"/><rect x="70.0" y="555.3" width="7" height="7" fill="#e4e4e4"/><rect x="107.7" y="552.9" width="7" height="7" fill="#e4e4e4"/><rect x="144.3" y="546.8" width="7" height="7" fill="#e4e4e4"/><rect x="181.7" y="539.1" width="7" height="7" fill="#e4e4e4"/><rect x="219.5" y="528.5" width="7" height="7" fill="#e4e4e4"/><rect x="256.8" y="515.5" width="7" height="7" fill="#e4e4e4"/><rect x="293.5" y="500.1" width="7" height="7" fill="#e4e4e4"/><rect x="330.8" y="481.0" width="7" height="7" fill="#e4e4e4"/><rect x="367.8" y="458.5" width="7" height="7" fill="#e4e4e4"/><rect x="401.1" y="435.5" width="7" height="7" fill="#e4e4e4"/><rect x="438.8" y="407.1" width="7" height="7" fill="#e4e4e4"/><rect x="475.5" y="375.4" width="7" height="7" fill="#e4e4e4"/><rect x="512.0" y="339.5" width="7" height="7" fill="#e4e4e4"/><rect x="550.5" y="300.2" width="7" height="7" fill="#e4e4e4"/><rect x="587.5" y="256.5" width="7" height="7" fill="#e4e4e4"/><rect x="624.5" y="208.9" width="7" height="7" fill="#e4e4e4"/><rect x="661.1" y="158.2" width="7" height="7" fill="#e4e4e4"/><rect x="697.5" y="101.3" width="7" height="7" fill="#e4e4e4"/><rect x="734.2" y="42.4" width="7" height="7" fill="#e4e4e4"/></svg>
<div class="a" style="left:1147px;top:440px;width:746px;height:567px;background:#ffffff;"></div>
<div class="a" style="left:1147px;top:440px;width:744px;height:2px;background:#707070;"></div>
<div class="a" style="left:1147px;top:440px;width:2px;height:565px;background:#707070;"></div>
<div class="a" style="left:1149px;top:442px;width:742px;height:1px;background:#a0a0a0;"></div>
<div class="a" style="left:1149px;top:442px;width:1px;height:563px;background:#a0a0a0;"></div>
<svg class="a" style="left:1150px;top:443px" width="740" height="561" viewBox="0 0 740 561"><defs><linearGradient id="g1150" x1="0" x2="1" y1="0" y2="0"><stop offset="0" stop-color="#202020"/><stop offset="1" stop-color="#fcfcfc"/></linearGradient></defs><rect x="0" y="0" width="740" height="561" fill="url(#g1150)"/><line x1="74.5" y1="0" x2="74.5" y2="561" stroke="#034040" stroke-width="1"/><line x1="148.5" y1="0" x2="148.5" y2="561" stroke="#034040" stroke-width="1"/><line x1="222.5" y1="0" x2="222.5" y2="561" stroke="#034040" stroke-width="1"/><line x1="296.5" y1="0" x2="296.5" y2="561" stroke="#034040" stroke-width="1"/><line x1="370.5" y1="0" x2="370.5" y2="561" stroke="#034040" stroke-width="1"/><line x1="444.5" y1="0" x2="444.5" y2="561" stroke="#034040" stroke-width="1"/><line x1="518.5" y1="0" x2="518.5" y2="561" stroke="#034040" stroke-width="1"/><line x1="592.5" y1="0" x2="592.5" y2="561" stroke="#034040" stroke-width="1"/><line x1="666.5" y1="0" x2="666.5" y2="561" stroke="#034040" stroke-width="1"/><line x1="0" y1="28.5" x2="740" y2="28.5" stroke="#034040" stroke-width="1"/><text x="3" y="24" font-family="Liberation Serif" font-size="14" fill="#e0e0e0">2.9</text><line x1="0" y1="56.5" x2="740" y2="56.5" stroke="#034040" stroke-width="1"/><text x="3" y="52" font-family="Liberation Serif" font-size="14" fill="#e0e0e0">2.8</text><line x1="0" y1="84.5" x2="740" y2="84.5" stroke="#034040" stroke-width="1"/><text x="3" y="80" font-family="Liberation Serif" font-size="14" fill="#e0e0e0">2.7</text><line x1="0" y1="112.5" x2="740" y2="112.5" stroke="#034040" stroke-width="1"/><text x="3" y="108" font-family="Liberation Serif" font-size="14" fill="#e0e0e0">2.6</text><line x1="0" y1="140.5" x2="740" y2="140.5" stroke="#034040" stroke-width="1"/><text x="3" y="136" font-family="Liberation Serif" font-size="14" fill="#e0e0e0">2.5</text><line x1="0" y1="168.5" x2="740" y2="168.5" stroke="#034040" stroke-width="1"/><text x="3" y="164" font-family="Liberation Serif" font-size="14" fill="#e0e0e0">2.4</text><line x1="0" y1="196.5" x2="740" y2="196.5" stroke="#034040" stroke-width="1"/><text x="3" y="192" font-family="Liberation Serif" font-size="14" fill="#e0e0e0">2.3</text><line x1="0" y1="224.5" x2="740" y2="224.5" stroke="#034040" stroke-width="1"/><text x="3" y="220" font-family="Liberation Serif" font-size="14" fill="#e0e0e0">2.2</text><line x1="0" y1="252.5" x2="740" y2="252.5" stroke="#034040" stroke-width="1"/><text x="3" y="248" font-family="Liberation Serif" font-size="14" fill="#e0e0e0">2.1</text><line x1="0" y1="280.5" x2="740" y2="280.5" stroke="#034040" stroke-width="1"/><text x="3" y="276" font-family="Liberation Serif" font-size="14" fill="#e0e0e0">2</text><line x1="0" y1="309.5" x2="740" y2="309.5" stroke="#034040" stroke-width="1"/><text x="3" y="305" font-family="Liberation Serif" font-size="14" fill="#e0e0e0">1.9</text><line x1="0" y1="337.5" x2="740" y2="337.5" stroke="#034040" stroke-width="1"/><text x="3" y="333" font-family="Liberation Serif" font-size="14" fill="#e0e0e0">1.8</text><line x1="0" y1="365.5" x2="740" y2="365.5" stroke="#034040" stroke-width="1"/><text x="3" y="361" font-family="Liberation Serif" font-size="14" fill="#e0e0e0">1.7</text><line x1="0" y1="393.5" x2="740" y2="393.5" stroke="#034040" stroke-width="1"/><text x="3" y="389" font-family="Liberation Serif" font-size="14" fill="#e0e0e0">1.6</text><line x1="0" y1="421.5" x2="740" y2="421.5" stroke="#034040" stroke-width="1"/><text x="3" y="417" font-family="Liberation Serif" font-size="14" fill="#e0e0e0">1.5</text><line x1="0" y1="449.5" x2="740" y2="449.5" stroke="#034040" stroke-width="1"/><text x="3" y="445" font-family="Liberation Serif" font-size="14" fill="#e0e0e0">1.4</text><line x1="0" y1="477.5" x2="740" y2="477.5" stroke="#034040" stroke-width="1"/><text x="3" y="473" font-family="Liberation Serif" font-size="14" fill="#e0e0e0">1.3</text><line x1="0" y1="505.5" x2="740" y2="505.5" stroke="#034040" stroke-width="1"/><text x="3" y="501" font-family="Liberation Serif" font-size="14" fill="#e0e0e0">1.2</text><line x1="0" y1="533.5" x2="740" y2="533.5" stroke="#034040" stroke-width="1"/><text x="3" y="529" font-family="Liberation Serif" font-size="14" fill="#e0e0e0">1.1</text><text x="383" y="13" text-anchor="middle" font-family="Liberation Sans" font-weight="bold" font-size="14.7" fill="#d4d41e">EOTF(Gamma)</text><text x="76" y="558" font-family="Liberation Serif" font-size="13.6" fill="#e8e8e8">10% White</text><text x="150" y="558" font-family="Liberation Serif" font-size="13.6" fill="#e0e0e0">20% White</text><text x="224" y="558" font-family="Liberation Serif" font-size="13.6" fill="#d8d8d8">30% White</text><text x="298" y="558" font-family="Liberation Serif" font-size="13.6" fill="#a8a8a8">40% White</text><text x="372" y="558" font-family="Liberation Serif" font-size="13.6" fill="#848484">50% White</text><text x="446" y="558" font-family="Liberation Serif" font-size="13.6" fill="#606068">60% White</text><text x="520" y="558" font-family="Liberation Serif" font-size="13.6" fill="#505058">70% White</text><text x="594" y="558" font-family="Liberation Serif" font-size="13.6" fill="#303038">80% White</text><text x="668" y="558" font-family="Liberation Serif" font-size="13.6" fill="#101018">90% White</text><text x="730" y="520" text-anchor="end" font-family="Liberation Sans" font-weight="bold" font-size="16" fill="#a0a0a0">hcfr.sourceforge.net</text><line x1="37" y1="167.70000000000005" x2="703" y2="167.70000000000005" stroke="#ffffff" stroke-width="1" stroke-dasharray="3,3"/><polyline points="37.0,115.0 74.0,180.0 111.0,168.6 148.0,163.0 185.0,171.4 222.0,168.6 259.0,167.0 296.0,169.8 333.0,168.6 370.0,171.0 407.0,176.7 444.0,169.8 481.0,167.7 518.0,167.7 555.0,169.4 592.0,167.7 629.0,172.6 666.0,165.3 703.0,178.0" fill="none" stroke="#ffff20" stroke-width="2"/><rect x="33.0" y="163.7" width="8" height="8" fill="#e4e4e4"/><rect x="70.0" y="163.7" width="8" height="8" fill="#e4e4e4"/><rect x="107.0" y="163.7" width="8" height="8" fill="#e4e4e4"/><rect x="144.0" y="163.7" width="8" height="8" fill="#e4e4e4"/><rect x="181.0" y="163.7" width="8" height="8" fill="#e4e4e4"/><rect x="218.0" y="163.7" width="8" height="8" fill="#e4e4e4"/><rect x="255.0" y="163.7" width="8" height="8" fill="#e4e4e4"/><rect x="292.0" y="163.7" width="8" height="8" fill="#e4e4e4"/><rect x="329.0" y="163.7" width="8" height="8" fill="#e4e4e4"/><rect x="366.0" y="163.7" width="8" height="8" fill="#e4e4e4"/><rect x="403.0" y="163.7" width="8" height="8" fill="#e4e4e4"/><rect x="440.0" y="163.7" width="8" height="8" fill="#e4e4e4"/><rect x="477.0" y="163.7" width="8" height="8" fill="#e4e4e4"/><rect x="514.0" y="163.7" width="8" height="8" fill="#e4e4e4"/><rect x="551.0" y="163.7" width="8" height="8" fill="#e4e4e4"/><rect x="588.0" y="163.7" width="8" height="8" fill="#e4e4e4"/><rect x="625.0" y="163.7" width="8" height="8" fill="#e4e4e4"/><rect x="662.0" y="163.7" width="8" height="8" fill="#e4e4e4"/><rect x="699.0" y="163.7" width="8" height="8" fill="#e4e4e4"/><rect x="33.0" y="111.0" width="8" height="8" fill="#ffff20"/><rect x="70.0" y="176.0" width="8" height="8" fill="#ffff20"/><rect x="144.0" y="159.0" width="8" height="8" fill="#ffff20"/><rect x="181.0" y="167.4" width="8" height="8" fill="#ffff20"/><rect x="366.0" y="167.0" width="8" height="8" fill="#ffff20"/><rect x="403.0" y="172.7" width="8" height="8" fill="#ffff20"/><rect x="625.0" y="168.6" width="8" height="8" fill="#ffff20"/><rect x="699.0" y="174.0" width="8" height="8" fill="#ffff20"/></svg>
<div class="a" style="left:396px;top:409px;width:302px;height:23px;background:#707070;"></div>
<div class="a" style="left:398px;top:411px;width:299px;height:20px;background:#ffffff;"></div>
<div class="t" style="left:401px;top:414px;font-size:13.5px;color:#000;">Luminance - Gamma</div>
<div class="a" style="left:680px;top:412px;width:16px;height:18px;background:#f0f0f0;border-top:1px solid #fff;border-left:1px solid #fff;border-bottom:1px solid #707070;border-right:1px solid #707070"></div>
<svg class="a" style="left:683px;top:418px" width="10" height="6"><path d="M1 0 L9 0 L5 5 Z" fill="#000"/></svg>
<div class="a" style="left:0px;top:1017px;width:1920px;height:2px;background:#6a6a6a;"></div>
<div class="a" style="left:0px;top:1019px;width:1920px;height:3px;background:#b8b8b8;"></div>
<div class="a" style="left:0px;top:1022px;width:1920px;height:1px;background:#ffffff;"></div>
<div class="a" style="left:0px;top:1023px;width:1920px;height:18px;background:#f0f0f0;"></div>
<div class="a" style="left:0px;top:93px;width:2px;height:929px;background:#a8a8a8;"></div>
<div class="a" style="left:1px;top:93px;width:1px;height:929px;background:#6a6a6a;"></div>
<div class="a" style="left:19px;top:1028px;width:1826px;height:6px;background:#888;border-radius:3px"></div>
<svg class="a" style="left:7px;top:1027px" width="8" height="9"><path d="M7 0 L1 4.5 L7 9 Z" fill="#8a8a8a"/></svg>
<svg class="a" style="left:1889px;top:1027px" width="8" height="9"><path d="M1 0 L7 4.5 L1 9 Z" fill="#8a8a8a"/></svg>
<div class="a" style="left:0px;top:1041px;width:1920px;height:1px;background:#000;"></div>
<div class="a" style="left:0px;top:1042px;width:1920px;height:19px;background:#f0f0f0;"></div>
<div class="a" style="left:0px;top:1042px;width:1920px;height:1px;background:#000;"></div>
<svg class="a" style="left:0;top:1042px" width="54" height="19"><rect x="1" y="1" width="52" height="17" fill="#f0f0f0" stroke="#000" stroke-width="2"/><line x1="18.5" y1="2" x2="18.5" y2="17" stroke="#808080"/><line x1="35.5" y1="2" x2="35.5" y2="17" stroke="#808080"/><path d="M6 5 L13 12 M13 5 L6 12" stroke="#000" stroke-width="1.3"/><path d="M28 5 L24 8.5 L28 12 Z" fill="#000"/><path d="M42 5 L46 8.5 L42 12 Z" fill="#000"/></svg>
<svg class="a" style="left:54px;top:1042px" width="340" height="19"><path d="M66.5 0.5 L74.5 18 H135.5 L143.5 0.5" fill="#f0f0f0" stroke="#000" stroke-width="1"/><path d="M135.5 0.5 L143.5 18 H240.5 L248.5 0.5" fill="#f0f0f0" stroke="#000" stroke-width="1"/><path d="M240.5 0.5 L248.5 18 H322.5 L330.5 0.5" fill="#f0f0f0" stroke="#000" stroke-width="1"/><path d="M0.5 0.5 L8.5 18 H66.5 L74.5 0.5" fill="#ffffff" stroke="#000" stroke-width="1"/></svg>
<div class="a" style="left:55px;top:1042px;width:72px;height:1px;background:#ffffff;"></div>
<div class="t" style="left:66px;top:1046px;font-size:11px;color:#000;font-weight:bold">Measures</div>
<div class="t" style="left:135px;top:1047px;font-size:11px;color:#000;transform:scaleX(0.84);transform-origin:0 0">CIE Diagram</div>
<div class="t" style="left:216px;top:1047px;font-size:11px;color:#000;transform:scaleX(0.835);transform-origin:0 0">Color temperature</div>
<div class="t" style="left:318px;top:1047px;font-size:11px;color:#000;transform:scaleX(0.85);transform-origin:0 0">RGB Levels</div>
<svg class="a" style="left:1751px;top:1044px" width="15" height="15"><path d="M1 1 H14 V11 L12 14 H9 L8 11 H7 L6 14 H3 L1 11 Z" fill="#808000" stroke="#303000"/><rect x="9" y="9" width="4" height="4" fill="#ffff00"/><path d="M4 3 H11 V8 H6 Z" fill="#ff2020"/></svg>
<div class="a" style="left:1846px;top:1044px;width:12px;height:12px;background:#ffffff;border:1px solid #808080;border-right-color:#d8d8d8;border-bottom-color:#d8d8d8"></div>
<div class="t" style="left:1865px;top:1045px;font-size:12.5px;color:#000;transform:scaleX(0.85);transform-origin:0 0">Reference</div>
<div class="a" style="left:0px;top:1061px;width:1920px;height:19px;background:#e6ecf6;"></div>
<div class="t" style="left:2px;top:1065px;font-size:12.5px;color:#000;transform:scaleX(0.89);transform-origin:0 0">Ready</div>
<div class="a" style="left:1743px;top:1062px;width:74px;height:18px;background:transparent;border-left:1px solid #a8bcd8;border-top:1px solid #a8bcd8"></div>
<div class="a" style="left:1820px;top:1062px;width:28px;height:18px;background:transparent;border-left:1px solid #a8bcd8;border-top:1px solid #a8bcd8"></div>
<div class="a" style="left:1851px;top:1062px;width:33px;height:18px;background:transparent;border-left:1px solid #a8bcd8;border-top:1px solid #a8bcd8"></div>
<div class="a" style="left:1887px;top:1062px;width:33px;height:18px;background:transparent;border-left:1px solid #a8bcd8;border-top:1px solid #a8bcd8"></div>
<div class="t" style="left:1853px;top:1065px;font-size:12.5px;color:#000;letter-spacing:-0.3px">NUM</div>
</body></html>
